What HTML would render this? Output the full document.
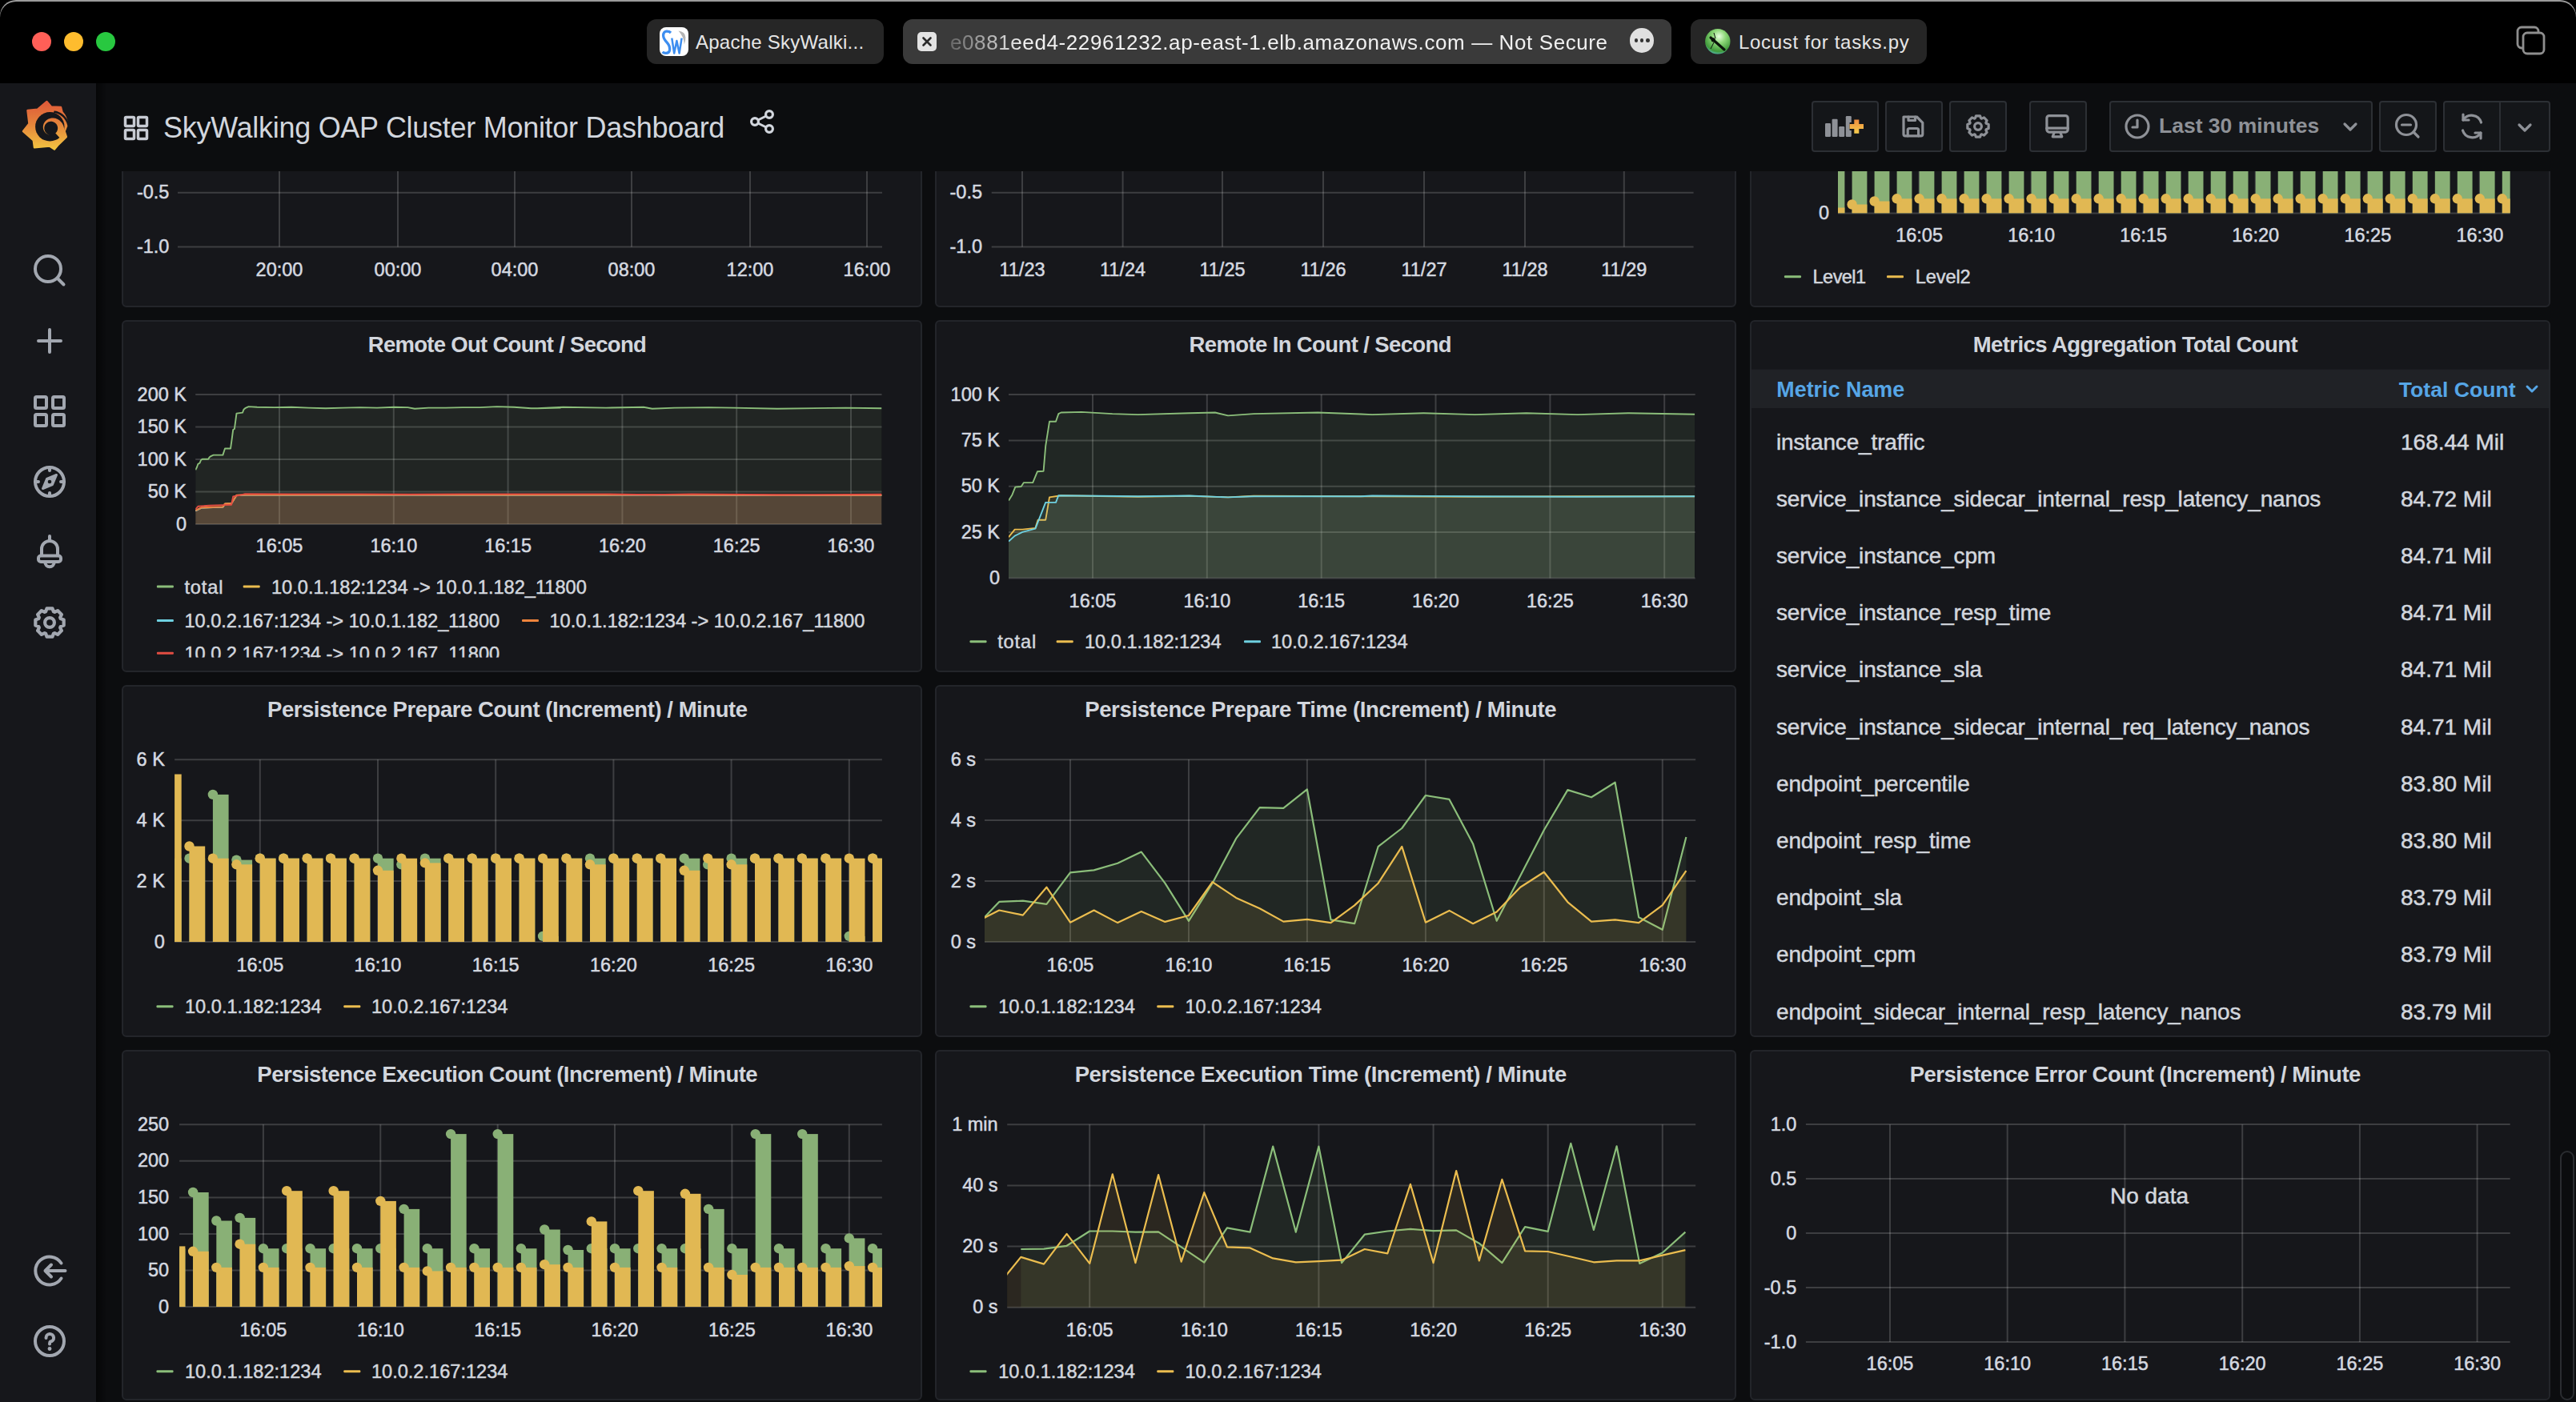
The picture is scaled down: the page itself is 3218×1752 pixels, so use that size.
<!DOCTYPE html><html><head><meta charset="utf-8"><style>html,body{margin:0;padding:0;background:#000;}body{width:3218px;height:1752px;overflow:hidden;position:relative;}</style></head><body>
<div style="position:absolute;left:120px;top:104px;width:3098px;height:1648px;background:#0c0d0f"></div>
<div style="position:absolute;left:0;top:214px;width:3218px;height:1538px;overflow:hidden">
<div style="position:absolute;left:152px;top:-270px;width:1000px;height:440px;box-sizing:border-box;background:#16171b;border:2px solid #23252a;border-radius:6px;overflow:hidden">
<svg style="position:absolute;left:-2px;top:-2px" width="1000" height="440" viewBox="152 -56 1000 440" font-family="Liberation Sans">
<line x1="222" x2="1102" y1="37" y2="37" stroke="rgba(255,255,255,0.17)" stroke-width="2"/>
<line x1="222" x2="1102" y1="104.9" y2="104.9" stroke="rgba(255,255,255,0.17)" stroke-width="2"/>
<line x1="222" x2="1102" y1="172.8" y2="172.8" stroke="rgba(255,255,255,0.17)" stroke-width="2"/>
<line x1="222" x2="1102" y1="240.7" y2="240.7" stroke="rgba(255,255,255,0.17)" stroke-width="2"/>
<line x1="222" x2="1102" y1="308.6" y2="308.6" stroke="rgba(255,255,255,0.17)" stroke-width="2"/>
<line x1="349" x2="349" y1="37" y2="308.6" stroke="rgba(255,255,255,0.17)" stroke-width="2"/>
<line x1="497" x2="497" y1="37" y2="308.6" stroke="rgba(255,255,255,0.17)" stroke-width="2"/>
<line x1="643" x2="643" y1="37" y2="308.6" stroke="rgba(255,255,255,0.17)" stroke-width="2"/>
<line x1="789" x2="789" y1="37" y2="308.6" stroke="rgba(255,255,255,0.17)" stroke-width="2"/>
<line x1="937" x2="937" y1="37" y2="308.6" stroke="rgba(255,255,255,0.17)" stroke-width="2"/>
<line x1="1083" x2="1083" y1="37" y2="308.6" stroke="rgba(255,255,255,0.17)" stroke-width="2"/>
<text x="211.4" y="44.6" text-anchor="end" font-size="23.5" fill="#d5d9e0" stroke="#d5d9e0" stroke-width="0.5">1.0</text>
<text x="211.4" y="112.5" text-anchor="end" font-size="23.5" fill="#d5d9e0" stroke="#d5d9e0" stroke-width="0.5">0.5</text>
<text x="211.4" y="180.4" text-anchor="end" font-size="23.5" fill="#d5d9e0" stroke="#d5d9e0" stroke-width="0.5">0</text>
<text x="211.4" y="248.3" text-anchor="end" font-size="23.5" fill="#d5d9e0" stroke="#d5d9e0" stroke-width="0.5">-0.5</text>
<text x="211.4" y="316.2" text-anchor="end" font-size="23.5" fill="#d5d9e0" stroke="#d5d9e0" stroke-width="0.5">-1.0</text>
<text x="349" y="344.7" text-anchor="middle" font-size="23.5" fill="#d5d9e0" stroke="#d5d9e0" stroke-width="0.5">20:00</text>
<text x="497" y="344.7" text-anchor="middle" font-size="23.5" fill="#d5d9e0" stroke="#d5d9e0" stroke-width="0.5">00:00</text>
<text x="643" y="344.7" text-anchor="middle" font-size="23.5" fill="#d5d9e0" stroke="#d5d9e0" stroke-width="0.5">04:00</text>
<text x="789" y="344.7" text-anchor="middle" font-size="23.5" fill="#d5d9e0" stroke="#d5d9e0" stroke-width="0.5">08:00</text>
<text x="937" y="344.7" text-anchor="middle" font-size="23.5" fill="#d5d9e0" stroke="#d5d9e0" stroke-width="0.5">12:00</text>
<text x="1083" y="344.7" text-anchor="middle" font-size="23.5" fill="#d5d9e0" stroke="#d5d9e0" stroke-width="0.5">16:00</text>
</svg>
</div>
<div style="position:absolute;left:1168px;top:-270px;width:1001px;height:440px;box-sizing:border-box;background:#16171b;border:2px solid #23252a;border-radius:6px;overflow:hidden">
<svg style="position:absolute;left:-2px;top:-2px" width="1001" height="440" viewBox="1168 -56 1001 440" font-family="Liberation Sans">
<line x1="1238.7" x2="2115.6" y1="37" y2="37" stroke="rgba(255,255,255,0.17)" stroke-width="2"/>
<line x1="1238.7" x2="2115.6" y1="104.9" y2="104.9" stroke="rgba(255,255,255,0.17)" stroke-width="2"/>
<line x1="1238.7" x2="2115.6" y1="172.8" y2="172.8" stroke="rgba(255,255,255,0.17)" stroke-width="2"/>
<line x1="1238.7" x2="2115.6" y1="240.7" y2="240.7" stroke="rgba(255,255,255,0.17)" stroke-width="2"/>
<line x1="1238.7" x2="2115.6" y1="308.6" y2="308.6" stroke="rgba(255,255,255,0.17)" stroke-width="2"/>
<line x1="1277" x2="1277" y1="37" y2="308.6" stroke="rgba(255,255,255,0.17)" stroke-width="2"/>
<line x1="1402.6" x2="1402.6" y1="37" y2="308.6" stroke="rgba(255,255,255,0.17)" stroke-width="2"/>
<line x1="1527" x2="1527" y1="37" y2="308.6" stroke="rgba(255,255,255,0.17)" stroke-width="2"/>
<line x1="1653" x2="1653" y1="37" y2="308.6" stroke="rgba(255,255,255,0.17)" stroke-width="2"/>
<line x1="1779" x2="1779" y1="37" y2="308.6" stroke="rgba(255,255,255,0.17)" stroke-width="2"/>
<line x1="1905" x2="1905" y1="37" y2="308.6" stroke="rgba(255,255,255,0.17)" stroke-width="2"/>
<line x1="2028.8" x2="2028.8" y1="37" y2="308.6" stroke="rgba(255,255,255,0.17)" stroke-width="2"/>
<text x="1227" y="44.6" text-anchor="end" font-size="23.5" fill="#d5d9e0" stroke="#d5d9e0" stroke-width="0.5">1.0</text>
<text x="1227" y="112.5" text-anchor="end" font-size="23.5" fill="#d5d9e0" stroke="#d5d9e0" stroke-width="0.5">0.5</text>
<text x="1227" y="180.4" text-anchor="end" font-size="23.5" fill="#d5d9e0" stroke="#d5d9e0" stroke-width="0.5">0</text>
<text x="1227" y="248.3" text-anchor="end" font-size="23.5" fill="#d5d9e0" stroke="#d5d9e0" stroke-width="0.5">-0.5</text>
<text x="1227" y="316.2" text-anchor="end" font-size="23.5" fill="#d5d9e0" stroke="#d5d9e0" stroke-width="0.5">-1.0</text>
<text x="1277" y="344.7" text-anchor="middle" font-size="23.5" fill="#d5d9e0" stroke="#d5d9e0" stroke-width="0.5">11/23</text>
<text x="1402.6" y="344.7" text-anchor="middle" font-size="23.5" fill="#d5d9e0" stroke="#d5d9e0" stroke-width="0.5">11/24</text>
<text x="1527" y="344.7" text-anchor="middle" font-size="23.5" fill="#d5d9e0" stroke="#d5d9e0" stroke-width="0.5">11/25</text>
<text x="1653" y="344.7" text-anchor="middle" font-size="23.5" fill="#d5d9e0" stroke="#d5d9e0" stroke-width="0.5">11/26</text>
<text x="1779" y="344.7" text-anchor="middle" font-size="23.5" fill="#d5d9e0" stroke="#d5d9e0" stroke-width="0.5">11/27</text>
<text x="1905" y="344.7" text-anchor="middle" font-size="23.5" fill="#d5d9e0" stroke="#d5d9e0" stroke-width="0.5">11/28</text>
<text x="2028.8" y="344.7" text-anchor="middle" font-size="23.5" fill="#d5d9e0" stroke="#d5d9e0" stroke-width="0.5">11/29</text>
</svg>
</div>
<div style="position:absolute;left:2186px;top:-270px;width:1000px;height:440px;box-sizing:border-box;background:#16171b;border:2px solid #23252a;border-radius:6px;overflow:hidden">
<svg style="position:absolute;left:-2px;top:-2px" width="1000" height="440" viewBox="2186 -56 1000 440" font-family="Liberation Sans">
<line x1="2296" x2="3135.7" y1="266.5" y2="266.5" stroke="rgba(255,255,255,0.17)" stroke-width="2"/>
<line x1="2397.6" x2="2397.6" y1="0" y2="266.5" stroke="rgba(255,255,255,0.17)" stroke-width="2"/>
<line x1="2537.6" x2="2537.6" y1="0" y2="266.5" stroke="rgba(255,255,255,0.17)" stroke-width="2"/>
<line x1="2677.7" x2="2677.7" y1="0" y2="266.5" stroke="rgba(255,255,255,0.17)" stroke-width="2"/>
<line x1="2817.7" x2="2817.7" y1="0" y2="266.5" stroke="rgba(255,255,255,0.17)" stroke-width="2"/>
<line x1="2957.8" x2="2957.8" y1="0" y2="266.5" stroke="rgba(255,255,255,0.17)" stroke-width="2"/>
<line x1="3097.8" x2="3097.8" y1="0" y2="266.5" stroke="rgba(255,255,255,0.17)" stroke-width="2"/>
<clipPath id="c2296_0"><rect x="2296" y="-40" width="839.7" height="306.5"/></clipPath><g clip-path="url(#c2296_0)">
<rect x="2285.6" y="-133.5" width="18.8" height="400" fill="#89b076" fill-opacity="1"/>
<rect x="2313.6" y="-133.5" width="18.8" height="400" fill="#89b076" fill-opacity="1"/>
<rect x="2341.6" y="-133.5" width="18.8" height="400" fill="#89b076" fill-opacity="1"/>
<rect x="2369.6" y="-133.5" width="18.8" height="400" fill="#89b076" fill-opacity="1"/>
<rect x="2397.6" y="-133.5" width="18.8" height="400" fill="#89b076" fill-opacity="1"/>
<rect x="2425.6" y="-133.5" width="18.8" height="400" fill="#89b076" fill-opacity="1"/>
<rect x="2453.6" y="-133.5" width="18.8" height="400" fill="#89b076" fill-opacity="1"/>
<rect x="2481.6" y="-133.5" width="18.8" height="400" fill="#89b076" fill-opacity="1"/>
<rect x="2509.6" y="-133.5" width="18.8" height="400" fill="#89b076" fill-opacity="1"/>
<rect x="2537.6" y="-133.5" width="18.8" height="400" fill="#89b076" fill-opacity="1"/>
<rect x="2565.6" y="-133.5" width="18.8" height="400" fill="#89b076" fill-opacity="1"/>
<rect x="2593.7" y="-133.5" width="18.8" height="400" fill="#89b076" fill-opacity="1"/>
<rect x="2621.7" y="-133.5" width="18.8" height="400" fill="#89b076" fill-opacity="1"/>
<rect x="2649.7" y="-133.5" width="18.8" height="400" fill="#89b076" fill-opacity="1"/>
<rect x="2677.7" y="-133.5" width="18.8" height="400" fill="#89b076" fill-opacity="1"/>
<rect x="2705.7" y="-133.5" width="18.8" height="400" fill="#89b076" fill-opacity="1"/>
<rect x="2733.7" y="-133.5" width="18.8" height="400" fill="#89b076" fill-opacity="1"/>
<rect x="2761.7" y="-133.5" width="18.8" height="400" fill="#89b076" fill-opacity="1"/>
<rect x="2789.7" y="-133.5" width="18.8" height="400" fill="#89b076" fill-opacity="1"/>
<rect x="2817.7" y="-133.5" width="18.8" height="400" fill="#89b076" fill-opacity="1"/>
<rect x="2845.7" y="-133.5" width="18.8" height="400" fill="#89b076" fill-opacity="1"/>
<rect x="2873.7" y="-133.5" width="18.8" height="400" fill="#89b076" fill-opacity="1"/>
<rect x="2901.7" y="-133.5" width="18.8" height="400" fill="#89b076" fill-opacity="1"/>
<rect x="2929.8" y="-133.5" width="18.8" height="400" fill="#89b076" fill-opacity="1"/>
<rect x="2957.8" y="-133.5" width="18.8" height="400" fill="#89b076" fill-opacity="1"/>
<rect x="2985.8" y="-133.5" width="18.8" height="400" fill="#89b076" fill-opacity="1"/>
<rect x="3013.8" y="-133.5" width="18.8" height="400" fill="#89b076" fill-opacity="1"/>
<rect x="3041.8" y="-133.5" width="18.8" height="400" fill="#89b076" fill-opacity="1"/>
<rect x="3069.8" y="-133.5" width="18.8" height="400" fill="#89b076" fill-opacity="1"/>
<rect x="3097.8" y="-133.5" width="18.8" height="400" fill="#89b076" fill-opacity="1"/>
<rect x="3125.8" y="-133.5" width="18.8" height="400" fill="#89b076" fill-opacity="1"/>
<circle cx="2285.6" cy="-133.5" r="6.2" fill="#89b076"/>
<circle cx="2313.6" cy="-133.5" r="6.2" fill="#89b076"/>
<circle cx="2341.6" cy="-133.5" r="6.2" fill="#89b076"/>
<circle cx="2369.6" cy="-133.5" r="6.2" fill="#89b076"/>
<circle cx="2397.6" cy="-133.5" r="6.2" fill="#89b076"/>
<circle cx="2425.6" cy="-133.5" r="6.2" fill="#89b076"/>
<circle cx="2453.6" cy="-133.5" r="6.2" fill="#89b076"/>
<circle cx="2481.6" cy="-133.5" r="6.2" fill="#89b076"/>
<circle cx="2509.6" cy="-133.5" r="6.2" fill="#89b076"/>
<circle cx="2537.6" cy="-133.5" r="6.2" fill="#89b076"/>
<circle cx="2565.6" cy="-133.5" r="6.2" fill="#89b076"/>
<circle cx="2593.7" cy="-133.5" r="6.2" fill="#89b076"/>
<circle cx="2621.7" cy="-133.5" r="6.2" fill="#89b076"/>
<circle cx="2649.7" cy="-133.5" r="6.2" fill="#89b076"/>
<circle cx="2677.7" cy="-133.5" r="6.2" fill="#89b076"/>
<circle cx="2705.7" cy="-133.5" r="6.2" fill="#89b076"/>
<circle cx="2733.7" cy="-133.5" r="6.2" fill="#89b076"/>
<circle cx="2761.7" cy="-133.5" r="6.2" fill="#89b076"/>
<circle cx="2789.7" cy="-133.5" r="6.2" fill="#89b076"/>
<circle cx="2817.7" cy="-133.5" r="6.2" fill="#89b076"/>
<circle cx="2845.7" cy="-133.5" r="6.2" fill="#89b076"/>
<circle cx="2873.7" cy="-133.5" r="6.2" fill="#89b076"/>
<circle cx="2901.7" cy="-133.5" r="6.2" fill="#89b076"/>
<circle cx="2929.8" cy="-133.5" r="6.2" fill="#89b076"/>
<circle cx="2957.8" cy="-133.5" r="6.2" fill="#89b076"/>
<circle cx="2985.8" cy="-133.5" r="6.2" fill="#89b076"/>
<circle cx="3013.8" cy="-133.5" r="6.2" fill="#89b076"/>
<circle cx="3041.8" cy="-133.5" r="6.2" fill="#89b076"/>
<circle cx="3069.8" cy="-133.5" r="6.2" fill="#89b076"/>
<circle cx="3097.8" cy="-133.5" r="6.2" fill="#89b076"/>
<circle cx="3125.8" cy="-133.5" r="6.2" fill="#89b076"/>
<rect x="2285.6" y="259.5" width="18.8" height="7" fill="#e1b853" fill-opacity="1"/>
<rect x="2313.6" y="255.5" width="18.8" height="11" fill="#e1b853" fill-opacity="1"/>
<rect x="2341.6" y="251.5" width="18.8" height="15" fill="#e1b853" fill-opacity="1"/>
<rect x="2369.6" y="248.3" width="18.8" height="18.2" fill="#e1b853" fill-opacity="1"/>
<rect x="2397.6" y="248.3" width="18.8" height="18.2" fill="#e1b853" fill-opacity="1"/>
<rect x="2425.6" y="248.3" width="18.8" height="18.2" fill="#e1b853" fill-opacity="1"/>
<rect x="2453.6" y="248.3" width="18.8" height="18.2" fill="#e1b853" fill-opacity="1"/>
<rect x="2481.6" y="248.3" width="18.8" height="18.2" fill="#e1b853" fill-opacity="1"/>
<rect x="2509.6" y="248.3" width="18.8" height="18.2" fill="#e1b853" fill-opacity="1"/>
<rect x="2537.6" y="248.3" width="18.8" height="18.2" fill="#e1b853" fill-opacity="1"/>
<rect x="2565.6" y="248.3" width="18.8" height="18.2" fill="#e1b853" fill-opacity="1"/>
<rect x="2593.7" y="248.3" width="18.8" height="18.2" fill="#e1b853" fill-opacity="1"/>
<rect x="2621.7" y="248.3" width="18.8" height="18.2" fill="#e1b853" fill-opacity="1"/>
<rect x="2649.7" y="248.3" width="18.8" height="18.2" fill="#e1b853" fill-opacity="1"/>
<rect x="2677.7" y="248.3" width="18.8" height="18.2" fill="#e1b853" fill-opacity="1"/>
<rect x="2705.7" y="248.3" width="18.8" height="18.2" fill="#e1b853" fill-opacity="1"/>
<rect x="2733.7" y="248.3" width="18.8" height="18.2" fill="#e1b853" fill-opacity="1"/>
<rect x="2761.7" y="248.3" width="18.8" height="18.2" fill="#e1b853" fill-opacity="1"/>
<rect x="2789.7" y="248.3" width="18.8" height="18.2" fill="#e1b853" fill-opacity="1"/>
<rect x="2817.7" y="248.3" width="18.8" height="18.2" fill="#e1b853" fill-opacity="1"/>
<rect x="2845.7" y="248.3" width="18.8" height="18.2" fill="#e1b853" fill-opacity="1"/>
<rect x="2873.7" y="248.3" width="18.8" height="18.2" fill="#e1b853" fill-opacity="1"/>
<rect x="2901.7" y="248.3" width="18.8" height="18.2" fill="#e1b853" fill-opacity="1"/>
<rect x="2929.8" y="248.3" width="18.8" height="18.2" fill="#e1b853" fill-opacity="1"/>
<rect x="2957.8" y="248.3" width="18.8" height="18.2" fill="#e1b853" fill-opacity="1"/>
<rect x="2985.8" y="248.3" width="18.8" height="18.2" fill="#e1b853" fill-opacity="1"/>
<rect x="3013.8" y="248.3" width="18.8" height="18.2" fill="#e1b853" fill-opacity="1"/>
<rect x="3041.8" y="248.3" width="18.8" height="18.2" fill="#e1b853" fill-opacity="1"/>
<rect x="3069.8" y="248.3" width="18.8" height="18.2" fill="#e1b853" fill-opacity="1"/>
<rect x="3097.8" y="248.3" width="18.8" height="18.2" fill="#e1b853" fill-opacity="1"/>
<rect x="3125.8" y="248.3" width="18.8" height="18.2" fill="#e1b853" fill-opacity="1"/>
<circle cx="2285.6" cy="259.5" r="6.2" fill="#e1b853"/>
<circle cx="2313.6" cy="255.5" r="6.2" fill="#e1b853"/>
<circle cx="2341.6" cy="251.5" r="6.2" fill="#e1b853"/>
<circle cx="2369.6" cy="248.3" r="6.2" fill="#e1b853"/>
<circle cx="2397.6" cy="248.3" r="6.2" fill="#e1b853"/>
<circle cx="2425.6" cy="248.3" r="6.2" fill="#e1b853"/>
<circle cx="2453.6" cy="248.3" r="6.2" fill="#e1b853"/>
<circle cx="2481.6" cy="248.3" r="6.2" fill="#e1b853"/>
<circle cx="2509.6" cy="248.3" r="6.2" fill="#e1b853"/>
<circle cx="2537.6" cy="248.3" r="6.2" fill="#e1b853"/>
<circle cx="2565.6" cy="248.3" r="6.2" fill="#e1b853"/>
<circle cx="2593.7" cy="248.3" r="6.2" fill="#e1b853"/>
<circle cx="2621.7" cy="248.3" r="6.2" fill="#e1b853"/>
<circle cx="2649.7" cy="248.3" r="6.2" fill="#e1b853"/>
<circle cx="2677.7" cy="248.3" r="6.2" fill="#e1b853"/>
<circle cx="2705.7" cy="248.3" r="6.2" fill="#e1b853"/>
<circle cx="2733.7" cy="248.3" r="6.2" fill="#e1b853"/>
<circle cx="2761.7" cy="248.3" r="6.2" fill="#e1b853"/>
<circle cx="2789.7" cy="248.3" r="6.2" fill="#e1b853"/>
<circle cx="2817.7" cy="248.3" r="6.2" fill="#e1b853"/>
<circle cx="2845.7" cy="248.3" r="6.2" fill="#e1b853"/>
<circle cx="2873.7" cy="248.3" r="6.2" fill="#e1b853"/>
<circle cx="2901.7" cy="248.3" r="6.2" fill="#e1b853"/>
<circle cx="2929.8" cy="248.3" r="6.2" fill="#e1b853"/>
<circle cx="2957.8" cy="248.3" r="6.2" fill="#e1b853"/>
<circle cx="2985.8" cy="248.3" r="6.2" fill="#e1b853"/>
<circle cx="3013.8" cy="248.3" r="6.2" fill="#e1b853"/>
<circle cx="3041.8" cy="248.3" r="6.2" fill="#e1b853"/>
<circle cx="3069.8" cy="248.3" r="6.2" fill="#e1b853"/>
<circle cx="3097.8" cy="248.3" r="6.2" fill="#e1b853"/>
<circle cx="3125.8" cy="248.3" r="6.2" fill="#e1b853"/>
</g>
<text x="2285" y="274.1" text-anchor="end" font-size="23.5" fill="#d5d9e0" stroke="#d5d9e0" stroke-width="0.5">0</text>
<text x="2397.6" y="302.2" text-anchor="middle" font-size="23.5" fill="#d5d9e0" stroke="#d5d9e0" stroke-width="0.5">16:05</text>
<text x="2537.6" y="302.2" text-anchor="middle" font-size="23.5" fill="#d5d9e0" stroke="#d5d9e0" stroke-width="0.5">16:10</text>
<text x="2677.7" y="302.2" text-anchor="middle" font-size="23.5" fill="#d5d9e0" stroke="#d5d9e0" stroke-width="0.5">16:15</text>
<text x="2817.7" y="302.2" text-anchor="middle" font-size="23.5" fill="#d5d9e0" stroke="#d5d9e0" stroke-width="0.5">16:20</text>
<text x="2957.8" y="302.2" text-anchor="middle" font-size="23.5" fill="#d5d9e0" stroke="#d5d9e0" stroke-width="0.5">16:25</text>
<text x="3097.8" y="302.2" text-anchor="middle" font-size="23.5" fill="#d5d9e0" stroke="#d5d9e0" stroke-width="0.5">16:30</text>
<rect x="2229" y="344.3" width="21" height="3" rx="1" fill="#8bbe7a"/>
<text x="2264.6" y="354.3" font-size="23.6" textLength="66.5" lengthAdjust="spacing" fill="#d2d6dd" stroke="#d2d6dd" stroke-width="0.5">Level1</text>
<rect x="2357" y="344.3" width="21" height="3" rx="1" fill="#ebbd4f"/>
<text x="2392.7" y="354.3" font-size="23.6" textLength="69" lengthAdjust="spacing" fill="#d2d6dd" stroke="#d2d6dd" stroke-width="0.5">Level2</text>
</svg>
</div>
<div style="position:absolute;left:152px;top:186px;width:1000px;height:440px;box-sizing:border-box;background:#16171b;border:2px solid #23252a;border-radius:6px;overflow:hidden">
<svg style="position:absolute;left:-2px;top:-2px" width="1000" height="440" viewBox="152 400 1000 440" font-family="Liberation Sans">
<text x="633.8" y="439.8" text-anchor="middle" font-size="27.5" font-weight="bold" textLength="348" lengthAdjust="spacing" fill="#d2d6dd">Remote Out Count / Second</text>
<line x1="244.2" x2="1101.5" y1="493" y2="493" stroke="rgba(255,255,255,0.17)" stroke-width="2"/>
<line x1="244.2" x2="1101.5" y1="533.5" y2="533.5" stroke="rgba(255,255,255,0.17)" stroke-width="2"/>
<line x1="244.2" x2="1101.5" y1="574" y2="574" stroke="rgba(255,255,255,0.17)" stroke-width="2"/>
<line x1="244.2" x2="1101.5" y1="614.5" y2="614.5" stroke="rgba(255,255,255,0.17)" stroke-width="2"/>
<line x1="244.2" x2="1101.5" y1="655" y2="655" stroke="rgba(255,255,255,0.17)" stroke-width="2"/>
<line x1="349" x2="349" y1="493" y2="655" stroke="rgba(255,255,255,0.17)" stroke-width="2"/>
<line x1="491.8" x2="491.8" y1="493" y2="655" stroke="rgba(255,255,255,0.17)" stroke-width="2"/>
<line x1="634.6" x2="634.6" y1="493" y2="655" stroke="rgba(255,255,255,0.17)" stroke-width="2"/>
<line x1="777.4" x2="777.4" y1="493" y2="655" stroke="rgba(255,255,255,0.17)" stroke-width="2"/>
<line x1="920.2" x2="920.2" y1="493" y2="655" stroke="rgba(255,255,255,0.17)" stroke-width="2"/>
<line x1="1063" x2="1063" y1="493" y2="655" stroke="rgba(255,255,255,0.17)" stroke-width="2"/>
<clipPath id="c244_493"><rect x="244.2" y="453" width="857.3" height="202"/></clipPath><g clip-path="url(#c244_493)">
<path d="M244.2 587.2 L245.9 584 L247.4 579.8 L249.5 578.7 L251 575 L252.7 573.8 L260.2 573.8 L261.7 571.2 L263.4 570.1 L266.6 568.6 L278.4 568.6 L281 560.5 L288 560.5 L289.5 549.8 L291.2 537 L292.9 535.9 L295.5 516.6 L303 515.6 L304.5 511.7 L306.2 510.2 L310.5 508.1 L321.2 508.7 L342.6 509.1 L364 508.7 L385.4 509.6 L406.8 510.2 L428.2 509.6 L449.6 509.1 L471 509.6 L492.4 508.7 L509.5 509.1 L518.1 510.8 L535.2 509.6 L556.6 509.6 L578 509.1 L599.4 509.1 L620.8 508.1 L642.2 508.7 L663.6 510.2 L700 509.6 L671.4 510.2 L703.5 508.7 L757 509.6 L804.1 508.7 L814.8 510.8 L842.6 509.6 L885.4 509.1 L917.5 509.6 L971 510.8 L1056.6 509.6 L1101.5 510.2 L1101.5 655 L244.2 655 Z" fill="#8bbe7a" fill-opacity="0.09"/>
<path d="M244.2 587.2 L245.9 584 L247.4 579.8 L249.5 578.7 L251 575 L252.7 573.8 L260.2 573.8 L261.7 571.2 L263.4 570.1 L266.6 568.6 L278.4 568.6 L281 560.5 L288 560.5 L289.5 549.8 L291.2 537 L292.9 535.9 L295.5 516.6 L303 515.6 L304.5 511.7 L306.2 510.2 L310.5 508.1 L321.2 508.7 L342.6 509.1 L364 508.7 L385.4 509.6 L406.8 510.2 L428.2 509.6 L449.6 509.1 L471 509.6 L492.4 508.7 L509.5 509.1 L518.1 510.8 L535.2 509.6 L556.6 509.6 L578 509.1 L599.4 509.1 L620.8 508.1 L642.2 508.7 L663.6 510.2 L700 509.6 L671.4 510.2 L703.5 508.7 L757 509.6 L804.1 508.7 L814.8 510.8 L842.6 509.6 L885.4 509.1 L917.5 509.6 L971 510.8 L1056.6 509.6 L1101.5 510.2" fill="none" stroke="#8bbe7a" stroke-width="1.9" stroke-linejoin="round"/>
<path d="M244.2 638.3 L251.6 634.6 L278.4 633.6 L281 629.7 L289.1 629.3 L295.5 619 L306.2 618.6 L364 618.6 L449.6 618.6 L578 618.6 L700 618.6 L757 618.6 L864 618.6 L971 619 L1101.5 619 L1101.5 655 L244.2 655 Z" fill="#ebbd4f" fill-opacity="0.09"/>
<path d="M244.2 638.3 L251.6 634.6 L278.4 633.6 L281 629.7 L289.1 629.3 L295.5 619 L306.2 618.6 L364 618.6 L449.6 618.6 L578 618.6 L700 618.6 L757 618.6 L864 618.6 L971 619 L1101.5 619" fill="none" stroke="#ebbd4f" stroke-width="1.9" stroke-linejoin="round"/>
<path d="M244.2 638.3 L251.6 634.6 L278.4 633.6 L281 629.7 L289.1 629.3 L295.5 619 L306.2 618.6 L364 618.6 L449.6 618.6 L578 618.6 L700 618.6 L757 618.6 L864 618.6 L971 619 L1101.5 619 L1101.5 655 L244.2 655 Z" fill="#6ed0e0" fill-opacity="0.09"/>
<path d="M244.2 638.3 L251.6 634.6 L278.4 633.6 L281 629.7 L289.1 629.3 L295.5 619 L306.2 618.6 L364 618.6 L449.6 618.6 L578 618.6 L700 618.6 L757 618.6 L864 618.6 L971 619 L1101.5 619" fill="none" stroke="#6ed0e0" stroke-width="1.9" stroke-linejoin="round"/>
<path d="M244.2 638 L251.6 634.3 L278.4 633.3 L281 629.4 L289.1 629 L295.5 618.7 L306.2 618.3 L364 618.3 L449.6 618.3 L578 618.3 L700 618.3 L757 618.3 L864 618.3 L971 618.7 L1101.5 618.7 L1101.5 655 L244.2 655 Z" fill="#ef843c" fill-opacity="0.09"/>
<path d="M244.2 638 L251.6 634.3 L278.4 633.3 L281 629.4 L289.1 629 L295.5 618.7 L306.2 618.3 L364 618.3 L449.6 618.3 L578 618.3 L700 618.3 L757 618.3 L864 618.3 L971 618.7 L1101.5 618.7" fill="none" stroke="#ef843c" stroke-width="1.9" stroke-linejoin="round"/>
<path d="M244.2 636.5 L247.4 632.8 L261.3 631.8 L278.4 631.1 L289.1 630.7 L291.2 620.4 L299.8 618.7 L306.2 617.2 L364 617.4 L449.6 617.4 L513.8 617.8 L578 617.4 L700 617.4 L757 617.4 L812.6 618.3 L864 617.4 L971 618.3 L1101.5 617.8 L1101.5 655 L244.2 655 Z" fill="#e24d42" fill-opacity="0.09"/>
<path d="M244.2 636.5 L247.4 632.8 L261.3 631.8 L278.4 631.1 L289.1 630.7 L291.2 620.4 L299.8 618.7 L306.2 617.2 L364 617.4 L449.6 617.4 L513.8 617.8 L578 617.4 L700 617.4 L757 617.4 L812.6 618.3 L864 617.4 L971 618.3 L1101.5 617.8" fill="none" stroke="#e24d42" stroke-width="1.9" stroke-linejoin="round"/>
</g>
<text x="233" y="500.6" text-anchor="end" font-size="23.5" fill="#d5d9e0" stroke="#d5d9e0" stroke-width="0.5">200 K</text>
<text x="233" y="541.1" text-anchor="end" font-size="23.5" fill="#d5d9e0" stroke="#d5d9e0" stroke-width="0.5">150 K</text>
<text x="233" y="581.6" text-anchor="end" font-size="23.5" fill="#d5d9e0" stroke="#d5d9e0" stroke-width="0.5">100 K</text>
<text x="233" y="622.1" text-anchor="end" font-size="23.5" fill="#d5d9e0" stroke="#d5d9e0" stroke-width="0.5">50 K</text>
<text x="233" y="662.6" text-anchor="end" font-size="23.5" fill="#d5d9e0" stroke="#d5d9e0" stroke-width="0.5">0</text>
<text x="349" y="690.1" text-anchor="middle" font-size="23.5" fill="#d5d9e0" stroke="#d5d9e0" stroke-width="0.5">16:05</text>
<text x="491.8" y="690.1" text-anchor="middle" font-size="23.5" fill="#d5d9e0" stroke="#d5d9e0" stroke-width="0.5">16:10</text>
<text x="634.6" y="690.1" text-anchor="middle" font-size="23.5" fill="#d5d9e0" stroke="#d5d9e0" stroke-width="0.5">16:15</text>
<text x="777.4" y="690.1" text-anchor="middle" font-size="23.5" fill="#d5d9e0" stroke="#d5d9e0" stroke-width="0.5">16:20</text>
<text x="920.2" y="690.1" text-anchor="middle" font-size="23.5" fill="#d5d9e0" stroke="#d5d9e0" stroke-width="0.5">16:25</text>
<text x="1063" y="690.1" text-anchor="middle" font-size="23.5" fill="#d5d9e0" stroke="#d5d9e0" stroke-width="0.5">16:30</text>
<rect x="195.9" y="731.5" width="21" height="3" rx="1" fill="#8bbe7a"/>
<text x="230.4" y="741.5" font-size="23.6" textLength="48" lengthAdjust="spacing" fill="#d2d6dd" stroke="#d2d6dd" stroke-width="0.5">total</text>
<rect x="303.7" y="731.5" width="21" height="3" rx="1" fill="#ebbd4f"/>
<text x="339" y="741.5" font-size="23.6" fill="#d2d6dd" stroke="#d2d6dd" stroke-width="0.5">10.0.1.182:1234 -&gt; 10.0.1.182_11800</text>
<rect x="195.9" y="774" width="21" height="3" rx="1" fill="#6ed0e0"/>
<text x="230.4" y="784" font-size="23.6" fill="#d2d6dd" stroke="#d2d6dd" stroke-width="0.5">10.0.2.167:1234 -&gt; 10.0.1.182_11800</text>
<rect x="652" y="774" width="21" height="3" rx="1" fill="#ef843c"/>
<text x="686.5" y="784" font-size="23.6" fill="#d2d6dd" stroke="#d2d6dd" stroke-width="0.5">10.0.1.182:1234 -&gt; 10.0.2.167_11800</text>
<clipPath id="lgclip1"><rect x="150" y="790" width="1000" height="31.5"/></clipPath><g clip-path="url(#lgclip1)">
<rect x="195.9" y="814.8" width="21" height="3" rx="1" fill="#e24d42"/>
<text x="230.4" y="824.8" font-size="23.6" fill="#d2d6dd" stroke="#d2d6dd" stroke-width="0.5">10.0.2.167:1234 -&gt; 10.0.2.167_11800</text>
</g>
</svg>
</div>
<div style="position:absolute;left:1168px;top:186px;width:1001px;height:440px;box-sizing:border-box;background:#16171b;border:2px solid #23252a;border-radius:6px;overflow:hidden">
<svg style="position:absolute;left:-2px;top:-2px" width="1001" height="440" viewBox="1168 400 1001 440" font-family="Liberation Sans">
<text x="1649.5" y="439.8" text-anchor="middle" font-size="27.5" font-weight="bold" textLength="328" lengthAdjust="spacing" fill="#d2d6dd">Remote In Count / Second</text>
<line x1="1260" x2="2117.7" y1="493" y2="493" stroke="rgba(255,255,255,0.17)" stroke-width="2"/>
<line x1="1260" x2="2117.7" y1="550.4" y2="550.4" stroke="rgba(255,255,255,0.17)" stroke-width="2"/>
<line x1="1260" x2="2117.7" y1="607.8" y2="607.8" stroke="rgba(255,255,255,0.17)" stroke-width="2"/>
<line x1="1260" x2="2117.7" y1="665.1" y2="665.1" stroke="rgba(255,255,255,0.17)" stroke-width="2"/>
<line x1="1260" x2="2117.7" y1="722.5" y2="722.5" stroke="rgba(255,255,255,0.17)" stroke-width="2"/>
<line x1="1365" x2="1365" y1="493" y2="722.5" stroke="rgba(255,255,255,0.17)" stroke-width="2"/>
<line x1="1507.8" x2="1507.8" y1="493" y2="722.5" stroke="rgba(255,255,255,0.17)" stroke-width="2"/>
<line x1="1650.7" x2="1650.7" y1="493" y2="722.5" stroke="rgba(255,255,255,0.17)" stroke-width="2"/>
<line x1="1793.5" x2="1793.5" y1="493" y2="722.5" stroke="rgba(255,255,255,0.17)" stroke-width="2"/>
<line x1="1936.4" x2="1936.4" y1="493" y2="722.5" stroke="rgba(255,255,255,0.17)" stroke-width="2"/>
<line x1="2079.2" x2="2079.2" y1="493" y2="722.5" stroke="rgba(255,255,255,0.17)" stroke-width="2"/>
<clipPath id="c1260_493"><rect x="1260" y="453" width="857.7" height="269.5"/></clipPath><g clip-path="url(#c1260_493)">
<path d="M1260 625.6 L1264.5 618.2 L1268.3 608.6 L1275.7 608 L1278.9 603.1 L1290.2 603.1 L1295.9 589.3 L1303.6 588.7 L1306.2 557.3 L1311 526.8 L1319 526.8 L1322.3 517.1 L1325.5 515.5 L1351.1 514.9 L1389.6 517.1 L1421.7 518.1 L1485.9 516.2 L1518 515.5 L1534.1 519.4 L1566.2 517.1 L1646.4 515.5 L1700 517.5 L1714.2 518.1 L1778.4 516.2 L1842.6 518.1 L1906.8 516.2 L1971 518.1 L2035.2 516.2 L2117.1 517.8 L2117.1 722.5 L1260 722.5 Z" fill="#8bbe7a" fill-opacity="0.1"/>
<path d="M1260 625.6 L1264.5 618.2 L1268.3 608.6 L1275.7 608 L1278.9 603.1 L1290.2 603.1 L1295.9 589.3 L1303.6 588.7 L1306.2 557.3 L1311 526.8 L1319 526.8 L1322.3 517.1 L1325.5 515.5 L1351.1 514.9 L1389.6 517.1 L1421.7 518.1 L1485.9 516.2 L1518 515.5 L1534.1 519.4 L1566.2 517.1 L1646.4 515.5 L1700 517.5 L1714.2 518.1 L1778.4 516.2 L1842.6 518.1 L1906.8 516.2 L1971 518.1 L2035.2 516.2 L2117.1 517.8" fill="none" stroke="#8bbe7a" stroke-width="1.9" stroke-linejoin="round"/>
<path d="M1260 671.2 L1267.7 661.6 L1277.3 661.6 L1293.4 659.9 L1296.6 649.7 L1306.2 649.7 L1311 621.4 L1325.5 619.2 L1421.7 620.8 L1485.9 619.8 L1534.1 621.4 L1566.2 619.8 L1700 620.2 L1714.2 620.2 L1842.6 620.8 L1971 620.2 L2117.1 620.2 L2117.1 722.5 L1260 722.5 Z" fill="#ebbd4f" fill-opacity="0.1"/>
<path d="M1260 671.2 L1267.7 661.6 L1277.3 661.6 L1293.4 659.9 L1296.6 649.7 L1306.2 649.7 L1311 621.4 L1325.5 619.2 L1421.7 620.8 L1485.9 619.8 L1534.1 621.4 L1566.2 619.8 L1700 620.2 L1714.2 620.2 L1842.6 620.8 L1971 620.2 L2117.1 620.2" fill="none" stroke="#ebbd4f" stroke-width="1.9" stroke-linejoin="round"/>
<path d="M1260 676.6 L1267.7 669.6 L1277.3 664.8 L1293.4 660.6 L1306.2 627.9 L1319 627.9 L1322.3 619.2 L1421.7 620.2 L1485.9 619.5 L1534.1 621.4 L1566.2 620.2 L1700 620.2 L1714.2 619.5 L1842.6 620.2 L1971 620.8 L2117.1 620.2 L2117.1 722.5 L1260 722.5 Z" fill="#6ed0e0" fill-opacity="0.1"/>
<path d="M1260 676.6 L1267.7 669.6 L1277.3 664.8 L1293.4 660.6 L1306.2 627.9 L1319 627.9 L1322.3 619.2 L1421.7 620.2 L1485.9 619.5 L1534.1 621.4 L1566.2 620.2 L1700 620.2 L1714.2 619.5 L1842.6 620.2 L1971 620.8 L2117.1 620.2" fill="none" stroke="#6ed0e0" stroke-width="1.9" stroke-linejoin="round"/>
</g>
<text x="1249" y="500.6" text-anchor="end" font-size="23.5" fill="#d5d9e0" stroke="#d5d9e0" stroke-width="0.5">100 K</text>
<text x="1249" y="558" text-anchor="end" font-size="23.5" fill="#d5d9e0" stroke="#d5d9e0" stroke-width="0.5">75 K</text>
<text x="1249" y="615.4" text-anchor="end" font-size="23.5" fill="#d5d9e0" stroke="#d5d9e0" stroke-width="0.5">50 K</text>
<text x="1249" y="672.7" text-anchor="end" font-size="23.5" fill="#d5d9e0" stroke="#d5d9e0" stroke-width="0.5">25 K</text>
<text x="1249" y="730.1" text-anchor="end" font-size="23.5" fill="#d5d9e0" stroke="#d5d9e0" stroke-width="0.5">0</text>
<text x="1365" y="758.5" text-anchor="middle" font-size="23.5" fill="#d5d9e0" stroke="#d5d9e0" stroke-width="0.5">16:05</text>
<text x="1507.8" y="758.5" text-anchor="middle" font-size="23.5" fill="#d5d9e0" stroke="#d5d9e0" stroke-width="0.5">16:10</text>
<text x="1650.7" y="758.5" text-anchor="middle" font-size="23.5" fill="#d5d9e0" stroke="#d5d9e0" stroke-width="0.5">16:15</text>
<text x="1793.5" y="758.5" text-anchor="middle" font-size="23.5" fill="#d5d9e0" stroke="#d5d9e0" stroke-width="0.5">16:20</text>
<text x="1936.4" y="758.5" text-anchor="middle" font-size="23.5" fill="#d5d9e0" stroke="#d5d9e0" stroke-width="0.5">16:25</text>
<text x="2079.2" y="758.5" text-anchor="middle" font-size="23.5" fill="#d5d9e0" stroke="#d5d9e0" stroke-width="0.5">16:30</text>
<rect x="1211.5" y="800.3" width="21" height="3" rx="1" fill="#8bbe7a"/>
<text x="1246.2" y="810.3" font-size="23.6" textLength="48" lengthAdjust="spacing" fill="#d2d6dd" stroke="#d2d6dd" stroke-width="0.5">total</text>
<rect x="1319.7" y="800.3" width="21" height="3" rx="1" fill="#ebbd4f"/>
<text x="1355" y="810.3" font-size="23.6" fill="#d2d6dd" stroke="#d2d6dd" stroke-width="0.5">10.0.1.182:1234</text>
<rect x="1554" y="800.3" width="21" height="3" rx="1" fill="#6ed0e0"/>
<text x="1588" y="810.3" font-size="23.6" fill="#d2d6dd" stroke="#d2d6dd" stroke-width="0.5">10.0.2.167:1234</text>
</svg>
</div>
<div style="position:absolute;left:2186px;top:186px;width:1000px;height:896px;box-sizing:border-box;background:#16171b;border:2px solid #23252a;border-radius:6px;overflow:hidden">
<svg style="position:absolute;left:-2px;top:-2px" width="1000" height="896" viewBox="2186 400 1000 896" font-family="Liberation Sans">
<text x="2667.7" y="439.8" text-anchor="middle" font-size="27.5" font-weight="bold" textLength="406" lengthAdjust="spacing" fill="#d2d6dd">Metrics Aggregation Total Count</text>
<rect x="2186" y="461.6" width="1000" height="48.4" fill="#202226"/>
<text x="2219.3" y="495.9" font-size="26.9" font-weight="bold" fill="#56a6e6">Metric Name</text>
<text x="2996.8" y="495.9" font-size="26.6" font-weight="bold" fill="#56a6e6">Total Count</text>
<path d="M3157 483 L3163 489 L3169 483" stroke="#56a6e6" stroke-width="3" fill="none" stroke-linecap="round" stroke-linejoin="round"/>
<text x="2219" y="561.6" font-size="28" letter-spacing="-0.15" fill="#d2d6dd" stroke="#d2d6dd" stroke-width="0.5">instance_traffic</text>
<text x="2999" y="561.6" font-size="28" fill="#d2d6dd" stroke="#d2d6dd" stroke-width="0.5">168.44 Mil</text>
<text x="2219" y="632.8" font-size="28" letter-spacing="-0.15" fill="#d2d6dd" stroke="#d2d6dd" stroke-width="0.5">service_instance_sidecar_internal_resp_latency_nanos</text>
<text x="2999" y="632.8" font-size="28" fill="#d2d6dd" stroke="#d2d6dd" stroke-width="0.5">84.72 Mil</text>
<text x="2219" y="704" font-size="28" letter-spacing="-0.15" fill="#d2d6dd" stroke="#d2d6dd" stroke-width="0.5">service_instance_cpm</text>
<text x="2999" y="704" font-size="28" fill="#d2d6dd" stroke="#d2d6dd" stroke-width="0.5">84.71 Mil</text>
<text x="2219" y="775.2" font-size="28" letter-spacing="-0.15" fill="#d2d6dd" stroke="#d2d6dd" stroke-width="0.5">service_instance_resp_time</text>
<text x="2999" y="775.2" font-size="28" fill="#d2d6dd" stroke="#d2d6dd" stroke-width="0.5">84.71 Mil</text>
<text x="2219" y="846.4" font-size="28" letter-spacing="-0.15" fill="#d2d6dd" stroke="#d2d6dd" stroke-width="0.5">service_instance_sla</text>
<text x="2999" y="846.4" font-size="28" fill="#d2d6dd" stroke="#d2d6dd" stroke-width="0.5">84.71 Mil</text>
<text x="2219" y="917.6" font-size="28" letter-spacing="-0.15" fill="#d2d6dd" stroke="#d2d6dd" stroke-width="0.5">service_instance_sidecar_internal_req_latency_nanos</text>
<text x="2999" y="917.6" font-size="28" fill="#d2d6dd" stroke="#d2d6dd" stroke-width="0.5">84.71 Mil</text>
<text x="2219" y="988.8" font-size="28" letter-spacing="-0.15" fill="#d2d6dd" stroke="#d2d6dd" stroke-width="0.5">endpoint_percentile</text>
<text x="2999" y="988.8" font-size="28" fill="#d2d6dd" stroke="#d2d6dd" stroke-width="0.5">83.80 Mil</text>
<text x="2219" y="1060" font-size="28" letter-spacing="-0.15" fill="#d2d6dd" stroke="#d2d6dd" stroke-width="0.5">endpoint_resp_time</text>
<text x="2999" y="1060" font-size="28" fill="#d2d6dd" stroke="#d2d6dd" stroke-width="0.5">83.80 Mil</text>
<text x="2219" y="1131.2" font-size="28" letter-spacing="-0.15" fill="#d2d6dd" stroke="#d2d6dd" stroke-width="0.5">endpoint_sla</text>
<text x="2999" y="1131.2" font-size="28" fill="#d2d6dd" stroke="#d2d6dd" stroke-width="0.5">83.79 Mil</text>
<text x="2219" y="1202.4" font-size="28" letter-spacing="-0.15" fill="#d2d6dd" stroke="#d2d6dd" stroke-width="0.5">endpoint_cpm</text>
<text x="2999" y="1202.4" font-size="28" fill="#d2d6dd" stroke="#d2d6dd" stroke-width="0.5">83.79 Mil</text>
<text x="2219" y="1273.6" font-size="28" letter-spacing="-0.15" fill="#d2d6dd" stroke="#d2d6dd" stroke-width="0.5">endpoint_sidecar_internal_resp_latency_nanos</text>
<text x="2999" y="1273.6" font-size="28" fill="#d2d6dd" stroke="#d2d6dd" stroke-width="0.5">83.79 Mil</text>
</svg>
</div>
<div style="position:absolute;left:152px;top:642px;width:1000px;height:440px;box-sizing:border-box;background:#16171b;border:2px solid #23252a;border-radius:6px;overflow:hidden">
<svg style="position:absolute;left:-2px;top:-2px" width="1000" height="440" viewBox="152 856 1000 440" font-family="Liberation Sans">
<text x="634" y="896.2" text-anchor="middle" font-size="27.5" font-weight="bold" textLength="600" lengthAdjust="spacing" fill="#d2d6dd">Persistence Prepare Count (Increment) / Minute</text>
<line x1="218.1" x2="1101.9" y1="949.2" y2="949.2" stroke="rgba(255,255,255,0.17)" stroke-width="2"/>
<line x1="218.1" x2="1101.9" y1="1025.2" y2="1025.2" stroke="rgba(255,255,255,0.17)" stroke-width="2"/>
<line x1="218.1" x2="1101.9" y1="1101.1" y2="1101.1" stroke="rgba(255,255,255,0.17)" stroke-width="2"/>
<line x1="218.1" x2="1101.9" y1="1177.1" y2="1177.1" stroke="rgba(255,255,255,0.17)" stroke-width="2"/>
<line x1="324.8" x2="324.8" y1="949.2" y2="1177.1" stroke="rgba(255,255,255,0.17)" stroke-width="2"/>
<line x1="472" x2="472" y1="949.2" y2="1177.1" stroke="rgba(255,255,255,0.17)" stroke-width="2"/>
<line x1="619.2" x2="619.2" y1="949.2" y2="1177.1" stroke="rgba(255,255,255,0.17)" stroke-width="2"/>
<line x1="766.4" x2="766.4" y1="949.2" y2="1177.1" stroke="rgba(255,255,255,0.17)" stroke-width="2"/>
<line x1="913.6" x2="913.6" y1="949.2" y2="1177.1" stroke="rgba(255,255,255,0.17)" stroke-width="2"/>
<line x1="1060.8" x2="1060.8" y1="949.2" y2="1177.1" stroke="rgba(255,255,255,0.17)" stroke-width="2"/>
<clipPath id="c218_949"><rect x="218.1" y="909.2" width="883.8" height="267.9"/></clipPath><g clip-path="url(#c218_949)">
<rect x="207" y="1072.7" width="19.7" height="104.4" fill="#89b076" fill-opacity="1"/>
<rect x="236.5" y="1072.7" width="19.7" height="104.4" fill="#89b076" fill-opacity="1"/>
<rect x="265.9" y="992.9" width="19.7" height="184.2" fill="#89b076" fill-opacity="1"/>
<rect x="295.4" y="1074.6" width="19.7" height="102.5" fill="#89b076" fill-opacity="1"/>
<rect x="324.8" y="1072.7" width="19.7" height="104.4" fill="#89b076" fill-opacity="1"/>
<rect x="354.2" y="1072.7" width="19.7" height="104.4" fill="#89b076" fill-opacity="1"/>
<rect x="383.7" y="1072.7" width="19.7" height="104.4" fill="#89b076" fill-opacity="1"/>
<rect x="413.1" y="1072.7" width="19.7" height="104.4" fill="#89b076" fill-opacity="1"/>
<rect x="442.6" y="1072.7" width="19.7" height="104.4" fill="#89b076" fill-opacity="1"/>
<rect x="472" y="1072.7" width="19.7" height="104.4" fill="#89b076" fill-opacity="1"/>
<rect x="501.4" y="1080.3" width="19.7" height="96.8" fill="#89b076" fill-opacity="1"/>
<rect x="530.9" y="1072.7" width="19.7" height="104.4" fill="#89b076" fill-opacity="1"/>
<rect x="560.3" y="1072.7" width="19.7" height="104.4" fill="#89b076" fill-opacity="1"/>
<rect x="589.8" y="1072.7" width="19.7" height="104.4" fill="#89b076" fill-opacity="1"/>
<rect x="619.2" y="1072.7" width="19.7" height="104.4" fill="#89b076" fill-opacity="1"/>
<rect x="648.6" y="1072.7" width="19.7" height="104.4" fill="#89b076" fill-opacity="1"/>
<rect x="678.1" y="1169.9" width="19.7" height="7.2" fill="#89b076" fill-opacity="1"/>
<rect x="707.5" y="1072.7" width="19.7" height="104.4" fill="#89b076" fill-opacity="1"/>
<rect x="737" y="1072.7" width="19.7" height="104.4" fill="#89b076" fill-opacity="1"/>
<rect x="766.4" y="1072.7" width="19.7" height="104.4" fill="#89b076" fill-opacity="1"/>
<rect x="795.8" y="1072.7" width="19.7" height="104.4" fill="#89b076" fill-opacity="1"/>
<rect x="825.3" y="1072.7" width="19.7" height="104.4" fill="#89b076" fill-opacity="1"/>
<rect x="854.7" y="1072.7" width="19.7" height="104.4" fill="#89b076" fill-opacity="1"/>
<rect x="884.2" y="1080.3" width="19.7" height="96.8" fill="#89b076" fill-opacity="1"/>
<rect x="913.6" y="1072.7" width="19.7" height="104.4" fill="#89b076" fill-opacity="1"/>
<rect x="943" y="1072.7" width="19.7" height="104.4" fill="#89b076" fill-opacity="1"/>
<rect x="972.5" y="1072.7" width="19.7" height="104.4" fill="#89b076" fill-opacity="1"/>
<rect x="1001.9" y="1072.7" width="19.7" height="104.4" fill="#89b076" fill-opacity="1"/>
<rect x="1031.4" y="1072.7" width="19.7" height="104.4" fill="#89b076" fill-opacity="1"/>
<rect x="1060.8" y="1169.9" width="19.7" height="7.2" fill="#89b076" fill-opacity="1"/>
<rect x="1090.2" y="1072.7" width="19.7" height="104.4" fill="#89b076" fill-opacity="1"/>
<circle cx="207" cy="1072.7" r="6.2" fill="#89b076"/>
<circle cx="236.5" cy="1072.7" r="6.2" fill="#89b076"/>
<circle cx="265.9" cy="992.9" r="6.2" fill="#89b076"/>
<circle cx="295.4" cy="1074.6" r="6.2" fill="#89b076"/>
<circle cx="324.8" cy="1072.7" r="6.2" fill="#89b076"/>
<circle cx="354.2" cy="1072.7" r="6.2" fill="#89b076"/>
<circle cx="383.7" cy="1072.7" r="6.2" fill="#89b076"/>
<circle cx="413.1" cy="1072.7" r="6.2" fill="#89b076"/>
<circle cx="442.6" cy="1072.7" r="6.2" fill="#89b076"/>
<circle cx="472" cy="1072.7" r="6.2" fill="#89b076"/>
<circle cx="501.4" cy="1080.3" r="6.2" fill="#89b076"/>
<circle cx="530.9" cy="1072.7" r="6.2" fill="#89b076"/>
<circle cx="560.3" cy="1072.7" r="6.2" fill="#89b076"/>
<circle cx="589.8" cy="1072.7" r="6.2" fill="#89b076"/>
<circle cx="619.2" cy="1072.7" r="6.2" fill="#89b076"/>
<circle cx="648.6" cy="1072.7" r="6.2" fill="#89b076"/>
<circle cx="678.1" cy="1169.9" r="6.2" fill="#89b076"/>
<circle cx="707.5" cy="1072.7" r="6.2" fill="#89b076"/>
<circle cx="737" cy="1072.7" r="6.2" fill="#89b076"/>
<circle cx="766.4" cy="1072.7" r="6.2" fill="#89b076"/>
<circle cx="795.8" cy="1072.7" r="6.2" fill="#89b076"/>
<circle cx="825.3" cy="1072.7" r="6.2" fill="#89b076"/>
<circle cx="854.7" cy="1072.7" r="6.2" fill="#89b076"/>
<circle cx="884.2" cy="1080.3" r="6.2" fill="#89b076"/>
<circle cx="913.6" cy="1072.7" r="6.2" fill="#89b076"/>
<circle cx="943" cy="1072.7" r="6.2" fill="#89b076"/>
<circle cx="972.5" cy="1072.7" r="6.2" fill="#89b076"/>
<circle cx="1001.9" cy="1072.7" r="6.2" fill="#89b076"/>
<circle cx="1031.4" cy="1072.7" r="6.2" fill="#89b076"/>
<circle cx="1060.8" cy="1169.9" r="6.2" fill="#89b076"/>
<circle cx="1090.2" cy="1072.7" r="6.2" fill="#89b076"/>
<rect x="207" y="967.5" width="19.7" height="209.6" fill="#e1b853" fill-opacity="1"/>
<rect x="236.5" y="1057.5" width="19.7" height="119.6" fill="#e1b853" fill-opacity="1"/>
<rect x="265.9" y="1072.7" width="19.7" height="104.4" fill="#e1b853" fill-opacity="1"/>
<rect x="295.4" y="1080.3" width="19.7" height="96.8" fill="#e1b853" fill-opacity="1"/>
<rect x="324.8" y="1072.7" width="19.7" height="104.4" fill="#e1b853" fill-opacity="1"/>
<rect x="354.2" y="1072.7" width="19.7" height="104.4" fill="#e1b853" fill-opacity="1"/>
<rect x="383.7" y="1072.7" width="19.7" height="104.4" fill="#e1b853" fill-opacity="1"/>
<rect x="413.1" y="1072.7" width="19.7" height="104.4" fill="#e1b853" fill-opacity="1"/>
<rect x="442.6" y="1072.7" width="19.7" height="104.4" fill="#e1b853" fill-opacity="1"/>
<rect x="472" y="1087.8" width="19.7" height="89.3" fill="#e1b853" fill-opacity="1"/>
<rect x="501.4" y="1072.7" width="19.7" height="104.4" fill="#e1b853" fill-opacity="1"/>
<rect x="530.9" y="1078.4" width="19.7" height="98.7" fill="#e1b853" fill-opacity="1"/>
<rect x="560.3" y="1072.7" width="19.7" height="104.4" fill="#e1b853" fill-opacity="1"/>
<rect x="589.8" y="1072.7" width="19.7" height="104.4" fill="#e1b853" fill-opacity="1"/>
<rect x="619.2" y="1072.7" width="19.7" height="104.4" fill="#e1b853" fill-opacity="1"/>
<rect x="648.6" y="1072.7" width="19.7" height="104.4" fill="#e1b853" fill-opacity="1"/>
<rect x="678.1" y="1072.7" width="19.7" height="104.4" fill="#e1b853" fill-opacity="1"/>
<rect x="707.5" y="1072.7" width="19.7" height="104.4" fill="#e1b853" fill-opacity="1"/>
<rect x="737" y="1080.3" width="19.7" height="96.8" fill="#e1b853" fill-opacity="1"/>
<rect x="766.4" y="1072.7" width="19.7" height="104.4" fill="#e1b853" fill-opacity="1"/>
<rect x="795.8" y="1072.7" width="19.7" height="104.4" fill="#e1b853" fill-opacity="1"/>
<rect x="825.3" y="1072.7" width="19.7" height="104.4" fill="#e1b853" fill-opacity="1"/>
<rect x="854.7" y="1087.8" width="19.7" height="89.3" fill="#e1b853" fill-opacity="1"/>
<rect x="884.2" y="1072.7" width="19.7" height="104.4" fill="#e1b853" fill-opacity="1"/>
<rect x="913.6" y="1080.3" width="19.7" height="96.8" fill="#e1b853" fill-opacity="1"/>
<rect x="943" y="1072.7" width="19.7" height="104.4" fill="#e1b853" fill-opacity="1"/>
<rect x="972.5" y="1072.7" width="19.7" height="104.4" fill="#e1b853" fill-opacity="1"/>
<rect x="1001.9" y="1072.7" width="19.7" height="104.4" fill="#e1b853" fill-opacity="1"/>
<rect x="1031.4" y="1072.7" width="19.7" height="104.4" fill="#e1b853" fill-opacity="1"/>
<rect x="1060.8" y="1072.7" width="19.7" height="104.4" fill="#e1b853" fill-opacity="1"/>
<rect x="1090.2" y="1072.7" width="19.7" height="104.4" fill="#e1b853" fill-opacity="1"/>
<circle cx="207" cy="967.5" r="6.2" fill="#e1b853"/>
<circle cx="236.5" cy="1057.5" r="6.2" fill="#e1b853"/>
<circle cx="265.9" cy="1072.7" r="6.2" fill="#e1b853"/>
<circle cx="295.4" cy="1080.3" r="6.2" fill="#e1b853"/>
<circle cx="324.8" cy="1072.7" r="6.2" fill="#e1b853"/>
<circle cx="354.2" cy="1072.7" r="6.2" fill="#e1b853"/>
<circle cx="383.7" cy="1072.7" r="6.2" fill="#e1b853"/>
<circle cx="413.1" cy="1072.7" r="6.2" fill="#e1b853"/>
<circle cx="442.6" cy="1072.7" r="6.2" fill="#e1b853"/>
<circle cx="472" cy="1087.8" r="6.2" fill="#e1b853"/>
<circle cx="501.4" cy="1072.7" r="6.2" fill="#e1b853"/>
<circle cx="530.9" cy="1078.4" r="6.2" fill="#e1b853"/>
<circle cx="560.3" cy="1072.7" r="6.2" fill="#e1b853"/>
<circle cx="589.8" cy="1072.7" r="6.2" fill="#e1b853"/>
<circle cx="619.2" cy="1072.7" r="6.2" fill="#e1b853"/>
<circle cx="648.6" cy="1072.7" r="6.2" fill="#e1b853"/>
<circle cx="678.1" cy="1072.7" r="6.2" fill="#e1b853"/>
<circle cx="707.5" cy="1072.7" r="6.2" fill="#e1b853"/>
<circle cx="737" cy="1080.3" r="6.2" fill="#e1b853"/>
<circle cx="766.4" cy="1072.7" r="6.2" fill="#e1b853"/>
<circle cx="795.8" cy="1072.7" r="6.2" fill="#e1b853"/>
<circle cx="825.3" cy="1072.7" r="6.2" fill="#e1b853"/>
<circle cx="854.7" cy="1087.8" r="6.2" fill="#e1b853"/>
<circle cx="884.2" cy="1072.7" r="6.2" fill="#e1b853"/>
<circle cx="913.6" cy="1080.3" r="6.2" fill="#e1b853"/>
<circle cx="943" cy="1072.7" r="6.2" fill="#e1b853"/>
<circle cx="972.5" cy="1072.7" r="6.2" fill="#e1b853"/>
<circle cx="1001.9" cy="1072.7" r="6.2" fill="#e1b853"/>
<circle cx="1031.4" cy="1072.7" r="6.2" fill="#e1b853"/>
<circle cx="1060.8" cy="1072.7" r="6.2" fill="#e1b853"/>
<circle cx="1090.2" cy="1072.7" r="6.2" fill="#e1b853"/>
</g>
<text x="205.9" y="956.8" text-anchor="end" font-size="23.5" fill="#d5d9e0" stroke="#d5d9e0" stroke-width="0.5">6 K</text>
<text x="205.9" y="1032.8" text-anchor="end" font-size="23.5" fill="#d5d9e0" stroke="#d5d9e0" stroke-width="0.5">4 K</text>
<text x="205.9" y="1108.7" text-anchor="end" font-size="23.5" fill="#d5d9e0" stroke="#d5d9e0" stroke-width="0.5">2 K</text>
<text x="205.9" y="1184.7" text-anchor="end" font-size="23.5" fill="#d5d9e0" stroke="#d5d9e0" stroke-width="0.5">0</text>
<text x="324.8" y="1214" text-anchor="middle" font-size="23.5" fill="#d5d9e0" stroke="#d5d9e0" stroke-width="0.5">16:05</text>
<text x="472" y="1214" text-anchor="middle" font-size="23.5" fill="#d5d9e0" stroke="#d5d9e0" stroke-width="0.5">16:10</text>
<text x="619.2" y="1214" text-anchor="middle" font-size="23.5" fill="#d5d9e0" stroke="#d5d9e0" stroke-width="0.5">16:15</text>
<text x="766.4" y="1214" text-anchor="middle" font-size="23.5" fill="#d5d9e0" stroke="#d5d9e0" stroke-width="0.5">16:20</text>
<text x="913.6" y="1214" text-anchor="middle" font-size="23.5" fill="#d5d9e0" stroke="#d5d9e0" stroke-width="0.5">16:25</text>
<text x="1060.8" y="1214" text-anchor="middle" font-size="23.5" fill="#d5d9e0" stroke="#d5d9e0" stroke-width="0.5">16:30</text>
<rect x="195.5" y="1256.3" width="21" height="3" rx="1" fill="#8bbe7a"/>
<text x="231" y="1266.3" font-size="23.6" fill="#d2d6dd" stroke="#d2d6dd" stroke-width="0.5">10.0.1.182:1234</text>
<rect x="429.3" y="1256.3" width="21" height="3" rx="1" fill="#ebbd4f"/>
<text x="463.9" y="1266.3" font-size="23.6" fill="#d2d6dd" stroke="#d2d6dd" stroke-width="0.5">10.0.2.167:1234</text>
</svg>
</div>
<div style="position:absolute;left:1168px;top:642px;width:1001px;height:440px;box-sizing:border-box;background:#16171b;border:2px solid #23252a;border-radius:6px;overflow:hidden">
<svg style="position:absolute;left:-2px;top:-2px" width="1001" height="440" viewBox="1168 856 1001 440" font-family="Liberation Sans">
<text x="1649.9" y="896.2" text-anchor="middle" font-size="27.5" font-weight="bold" textLength="589.5" lengthAdjust="spacing" fill="#d2d6dd">Persistence Prepare Time (Increment) / Minute</text>
<line x1="1230" x2="2118.2" y1="949.2" y2="949.2" stroke="rgba(255,255,255,0.17)" stroke-width="2"/>
<line x1="1230" x2="2118.2" y1="1025.1" y2="1025.1" stroke="rgba(255,255,255,0.17)" stroke-width="2"/>
<line x1="1230" x2="2118.2" y1="1101.1" y2="1101.1" stroke="rgba(255,255,255,0.17)" stroke-width="2"/>
<line x1="1230" x2="2118.2" y1="1177" y2="1177" stroke="rgba(255,255,255,0.17)" stroke-width="2"/>
<line x1="1337" x2="1337" y1="949.2" y2="1177" stroke="rgba(255,255,255,0.17)" stroke-width="2"/>
<line x1="1485" x2="1485" y1="949.2" y2="1177" stroke="rgba(255,255,255,0.17)" stroke-width="2"/>
<line x1="1632.9" x2="1632.9" y1="949.2" y2="1177" stroke="rgba(255,255,255,0.17)" stroke-width="2"/>
<line x1="1780.9" x2="1780.9" y1="949.2" y2="1177" stroke="rgba(255,255,255,0.17)" stroke-width="2"/>
<line x1="1928.8" x2="1928.8" y1="949.2" y2="1177" stroke="rgba(255,255,255,0.17)" stroke-width="2"/>
<line x1="2076.8" x2="2076.8" y1="949.2" y2="1177" stroke="rgba(255,255,255,0.17)" stroke-width="2"/>
<clipPath id="c1230_949"><rect x="1230" y="909.2" width="888.2" height="267.8"/></clipPath><g clip-path="url(#c1230_949)">
<path d="M1218.6 1158 L1248.2 1126.9 L1277.8 1125.7 L1307.4 1129.9 L1337 1090.4 L1366.6 1087.4 L1396.2 1078.7 L1425.8 1064.6 L1455.4 1103.7 L1485 1150.8 L1514.6 1103.7 L1544.1 1047.9 L1573.7 1009.2 L1603.3 1009.9 L1632.9 986.4 L1662.5 1149.3 L1692.1 1154.2 L1721.7 1057.8 L1751.3 1035 L1780.9 994 L1810.5 998.9 L1840.1 1054.4 L1869.7 1150.8 L1899.2 1094.6 L1928.8 1037.3 L1958.4 987.1 L1988 996.3 L2017.6 977.7 L2047.2 1146.2 L2076.8 1161.8 L2106.4 1046 L2106.4 1177 L1218.6 1177 Z" fill="#8bbe7a" fill-opacity="0.1"/>
<path d="M1218.6 1158 L1248.2 1126.9 L1277.8 1125.7 L1307.4 1129.9 L1337 1090.4 L1366.6 1087.4 L1396.2 1078.7 L1425.8 1064.6 L1455.4 1103.7 L1485 1150.8 L1514.6 1103.7 L1544.1 1047.9 L1573.7 1009.2 L1603.3 1009.9 L1632.9 986.4 L1662.5 1149.3 L1692.1 1154.2 L1721.7 1057.8 L1751.3 1035 L1780.9 994 L1810.5 998.9 L1840.1 1054.4 L1869.7 1150.8 L1899.2 1094.6 L1928.8 1037.3 L1958.4 987.1 L1988 996.3 L2017.6 977.7 L2047.2 1146.2 L2076.8 1161.8 L2106.4 1046" fill="none" stroke="#8bbe7a" stroke-width="2.2" stroke-linejoin="round"/>
<path d="M1218.6 1152.7 L1248.2 1137.5 L1277.8 1143.6 L1307.4 1108.7 L1337 1152.7 L1366.6 1137.5 L1396.2 1153.1 L1425.8 1139 L1455.4 1151.9 L1485 1144 L1514.6 1102.2 L1544.1 1121.9 L1573.7 1135.2 L1603.3 1151.6 L1632.9 1148.9 L1662.5 1153.1 L1692.1 1131.4 L1721.7 1103.7 L1751.3 1057.8 L1780.9 1152.7 L1810.5 1137.9 L1840.1 1154.2 L1869.7 1139.4 L1899.2 1108.7 L1928.8 1089.7 L1958.4 1127.3 L1988 1151.6 L2017.6 1149.3 L2047.2 1153.1 L2076.8 1131.1 L2106.4 1088.2 L2106.4 1177 L1218.6 1177 Z" fill="#ebbd4f" fill-opacity="0.1"/>
<path d="M1218.6 1152.7 L1248.2 1137.5 L1277.8 1143.6 L1307.4 1108.7 L1337 1152.7 L1366.6 1137.5 L1396.2 1153.1 L1425.8 1139 L1455.4 1151.9 L1485 1144 L1514.6 1102.2 L1544.1 1121.9 L1573.7 1135.2 L1603.3 1151.6 L1632.9 1148.9 L1662.5 1153.1 L1692.1 1131.4 L1721.7 1103.7 L1751.3 1057.8 L1780.9 1152.7 L1810.5 1137.9 L1840.1 1154.2 L1869.7 1139.4 L1899.2 1108.7 L1928.8 1089.7 L1958.4 1127.3 L1988 1151.6 L2017.6 1149.3 L2047.2 1153.1 L2076.8 1131.1 L2106.4 1088.2" fill="none" stroke="#ebbd4f" stroke-width="2.2" stroke-linejoin="round"/>
</g>
<text x="1219" y="956.8" text-anchor="end" font-size="23.5" fill="#d5d9e0" stroke="#d5d9e0" stroke-width="0.5">6 s</text>
<text x="1219" y="1032.7" text-anchor="end" font-size="23.5" fill="#d5d9e0" stroke="#d5d9e0" stroke-width="0.5">4 s</text>
<text x="1219" y="1108.7" text-anchor="end" font-size="23.5" fill="#d5d9e0" stroke="#d5d9e0" stroke-width="0.5">2 s</text>
<text x="1219" y="1184.6" text-anchor="end" font-size="23.5" fill="#d5d9e0" stroke="#d5d9e0" stroke-width="0.5">0 s</text>
<text x="1337" y="1214" text-anchor="middle" font-size="23.5" fill="#d5d9e0" stroke="#d5d9e0" stroke-width="0.5">16:05</text>
<text x="1485" y="1214" text-anchor="middle" font-size="23.5" fill="#d5d9e0" stroke="#d5d9e0" stroke-width="0.5">16:10</text>
<text x="1632.9" y="1214" text-anchor="middle" font-size="23.5" fill="#d5d9e0" stroke="#d5d9e0" stroke-width="0.5">16:15</text>
<text x="1780.9" y="1214" text-anchor="middle" font-size="23.5" fill="#d5d9e0" stroke="#d5d9e0" stroke-width="0.5">16:20</text>
<text x="1928.8" y="1214" text-anchor="middle" font-size="23.5" fill="#d5d9e0" stroke="#d5d9e0" stroke-width="0.5">16:25</text>
<text x="2076.8" y="1214" text-anchor="middle" font-size="23.5" fill="#d5d9e0" stroke="#d5d9e0" stroke-width="0.5">16:30</text>
<rect x="1211.5" y="1256.3" width="21" height="3" rx="1" fill="#8bbe7a"/>
<text x="1247.2" y="1266.3" font-size="23.6" fill="#d2d6dd" stroke="#d2d6dd" stroke-width="0.5">10.0.1.182:1234</text>
<rect x="1445.3" y="1256.3" width="21" height="3" rx="1" fill="#ebbd4f"/>
<text x="1480.4" y="1266.3" font-size="23.6" fill="#d2d6dd" stroke="#d2d6dd" stroke-width="0.5">10.0.2.167:1234</text>
</svg>
</div>
<div style="position:absolute;left:152px;top:1098px;width:1000px;height:438px;box-sizing:border-box;background:#16171b;border:2px solid #23252a;border-radius:6px;overflow:hidden">
<svg style="position:absolute;left:-2px;top:-2px" width="1000" height="438" viewBox="152 1312 1000 438" font-family="Liberation Sans">
<text x="634" y="1352.2" text-anchor="middle" font-size="27.5" font-weight="bold" textLength="625.3" lengthAdjust="spacing" fill="#d2d6dd">Persistence Execution Count (Increment) / Minute</text>
<line x1="224.1" x2="1101.9" y1="1405.2" y2="1405.2" stroke="rgba(255,255,255,0.17)" stroke-width="2"/>
<line x1="224.1" x2="1101.9" y1="1450.8" y2="1450.8" stroke="rgba(255,255,255,0.17)" stroke-width="2"/>
<line x1="224.1" x2="1101.9" y1="1496.4" y2="1496.4" stroke="rgba(255,255,255,0.17)" stroke-width="2"/>
<line x1="224.1" x2="1101.9" y1="1541.9" y2="1541.9" stroke="rgba(255,255,255,0.17)" stroke-width="2"/>
<line x1="224.1" x2="1101.9" y1="1587.5" y2="1587.5" stroke="rgba(255,255,255,0.17)" stroke-width="2"/>
<line x1="224.1" x2="1101.9" y1="1633.1" y2="1633.1" stroke="rgba(255,255,255,0.17)" stroke-width="2"/>
<line x1="328.9" x2="328.9" y1="1405.2" y2="1633.1" stroke="rgba(255,255,255,0.17)" stroke-width="2"/>
<line x1="475.3" x2="475.3" y1="1405.2" y2="1633.1" stroke="rgba(255,255,255,0.17)" stroke-width="2"/>
<line x1="621.7" x2="621.7" y1="1405.2" y2="1633.1" stroke="rgba(255,255,255,0.17)" stroke-width="2"/>
<line x1="768" x2="768" y1="1405.2" y2="1633.1" stroke="rgba(255,255,255,0.17)" stroke-width="2"/>
<line x1="914.4" x2="914.4" y1="1405.2" y2="1633.1" stroke="rgba(255,255,255,0.17)" stroke-width="2"/>
<line x1="1060.8" x2="1060.8" y1="1405.2" y2="1633.1" stroke="rgba(255,255,255,0.17)" stroke-width="2"/>
<clipPath id="c224_1405"><rect x="224.1" y="1365.2" width="877.8" height="267.9"/></clipPath><g clip-path="url(#c224_1405)">
<rect x="211.8" y="1560.2" width="19.6" height="72.9" fill="#89b076" fill-opacity="1"/>
<rect x="241.1" y="1490" width="19.6" height="143.1" fill="#89b076" fill-opacity="1"/>
<rect x="270.3" y="1525.5" width="19.6" height="107.6" fill="#89b076" fill-opacity="1"/>
<rect x="299.6" y="1521.9" width="19.6" height="111.2" fill="#89b076" fill-opacity="1"/>
<rect x="328.9" y="1560.2" width="19.6" height="72.9" fill="#89b076" fill-opacity="1"/>
<rect x="358.2" y="1560.2" width="19.6" height="72.9" fill="#89b076" fill-opacity="1"/>
<rect x="387.5" y="1560.2" width="19.6" height="72.9" fill="#89b076" fill-opacity="1"/>
<rect x="416.7" y="1560.2" width="19.6" height="72.9" fill="#89b076" fill-opacity="1"/>
<rect x="446" y="1560.2" width="19.6" height="72.9" fill="#89b076" fill-opacity="1"/>
<rect x="475.3" y="1560.2" width="19.6" height="72.9" fill="#89b076" fill-opacity="1"/>
<rect x="504.6" y="1510.9" width="19.6" height="122.2" fill="#89b076" fill-opacity="1"/>
<rect x="533.8" y="1560.2" width="19.6" height="72.9" fill="#89b076" fill-opacity="1"/>
<rect x="563.1" y="1417.1" width="19.6" height="216" fill="#89b076" fill-opacity="1"/>
<rect x="592.4" y="1560.2" width="19.6" height="72.9" fill="#89b076" fill-opacity="1"/>
<rect x="621.7" y="1417.1" width="19.6" height="216" fill="#89b076" fill-opacity="1"/>
<rect x="650.9" y="1560.2" width="19.6" height="72.9" fill="#89b076" fill-opacity="1"/>
<rect x="680.2" y="1536.5" width="19.6" height="96.6" fill="#89b076" fill-opacity="1"/>
<rect x="709.5" y="1562" width="19.6" height="71.1" fill="#89b076" fill-opacity="1"/>
<rect x="738.8" y="1560.2" width="19.6" height="72.9" fill="#89b076" fill-opacity="1"/>
<rect x="768" y="1560.2" width="19.6" height="72.9" fill="#89b076" fill-opacity="1"/>
<rect x="797.3" y="1560.2" width="19.6" height="72.9" fill="#89b076" fill-opacity="1"/>
<rect x="826.6" y="1560.2" width="19.6" height="72.9" fill="#89b076" fill-opacity="1"/>
<rect x="855.9" y="1560.2" width="19.6" height="72.9" fill="#89b076" fill-opacity="1"/>
<rect x="885.1" y="1510.9" width="19.6" height="122.2" fill="#89b076" fill-opacity="1"/>
<rect x="914.4" y="1560.2" width="19.6" height="72.9" fill="#89b076" fill-opacity="1"/>
<rect x="943.7" y="1417.1" width="19.6" height="216" fill="#89b076" fill-opacity="1"/>
<rect x="973" y="1560.2" width="19.6" height="72.9" fill="#89b076" fill-opacity="1"/>
<rect x="1002.2" y="1417.1" width="19.6" height="216" fill="#89b076" fill-opacity="1"/>
<rect x="1031.5" y="1560.2" width="19.6" height="72.9" fill="#89b076" fill-opacity="1"/>
<rect x="1060.8" y="1547.4" width="19.6" height="85.7" fill="#89b076" fill-opacity="1"/>
<rect x="1090.1" y="1560.2" width="19.6" height="72.9" fill="#89b076" fill-opacity="1"/>
<circle cx="211.8" cy="1560.2" r="6.2" fill="#89b076"/>
<circle cx="241.1" cy="1490" r="6.2" fill="#89b076"/>
<circle cx="270.3" cy="1525.5" r="6.2" fill="#89b076"/>
<circle cx="299.6" cy="1521.9" r="6.2" fill="#89b076"/>
<circle cx="328.9" cy="1560.2" r="6.2" fill="#89b076"/>
<circle cx="358.2" cy="1560.2" r="6.2" fill="#89b076"/>
<circle cx="387.5" cy="1560.2" r="6.2" fill="#89b076"/>
<circle cx="416.7" cy="1560.2" r="6.2" fill="#89b076"/>
<circle cx="446" cy="1560.2" r="6.2" fill="#89b076"/>
<circle cx="475.3" cy="1560.2" r="6.2" fill="#89b076"/>
<circle cx="504.6" cy="1510.9" r="6.2" fill="#89b076"/>
<circle cx="533.8" cy="1560.2" r="6.2" fill="#89b076"/>
<circle cx="563.1" cy="1417.1" r="6.2" fill="#89b076"/>
<circle cx="592.4" cy="1560.2" r="6.2" fill="#89b076"/>
<circle cx="621.7" cy="1417.1" r="6.2" fill="#89b076"/>
<circle cx="650.9" cy="1560.2" r="6.2" fill="#89b076"/>
<circle cx="680.2" cy="1536.5" r="6.2" fill="#89b076"/>
<circle cx="709.5" cy="1562" r="6.2" fill="#89b076"/>
<circle cx="738.8" cy="1560.2" r="6.2" fill="#89b076"/>
<circle cx="768" cy="1560.2" r="6.2" fill="#89b076"/>
<circle cx="797.3" cy="1560.2" r="6.2" fill="#89b076"/>
<circle cx="826.6" cy="1560.2" r="6.2" fill="#89b076"/>
<circle cx="855.9" cy="1560.2" r="6.2" fill="#89b076"/>
<circle cx="885.1" cy="1510.9" r="6.2" fill="#89b076"/>
<circle cx="914.4" cy="1560.2" r="6.2" fill="#89b076"/>
<circle cx="943.7" cy="1417.1" r="6.2" fill="#89b076"/>
<circle cx="973" cy="1560.2" r="6.2" fill="#89b076"/>
<circle cx="1002.2" cy="1417.1" r="6.2" fill="#89b076"/>
<circle cx="1031.5" cy="1560.2" r="6.2" fill="#89b076"/>
<circle cx="1060.8" cy="1547.4" r="6.2" fill="#89b076"/>
<circle cx="1090.1" cy="1560.2" r="6.2" fill="#89b076"/>
<rect x="211.8" y="1557.4" width="19.6" height="75.7" fill="#e1b853" fill-opacity="1"/>
<rect x="241.1" y="1563.8" width="19.6" height="69.3" fill="#e1b853" fill-opacity="1"/>
<rect x="270.3" y="1583.9" width="19.6" height="49.2" fill="#e1b853" fill-opacity="1"/>
<rect x="299.6" y="1554.7" width="19.6" height="78.4" fill="#e1b853" fill-opacity="1"/>
<rect x="328.9" y="1583.9" width="19.6" height="49.2" fill="#e1b853" fill-opacity="1"/>
<rect x="358.2" y="1488.2" width="19.6" height="144.9" fill="#e1b853" fill-opacity="1"/>
<rect x="387.5" y="1583.9" width="19.6" height="49.2" fill="#e1b853" fill-opacity="1"/>
<rect x="416.7" y="1488.2" width="19.6" height="144.9" fill="#e1b853" fill-opacity="1"/>
<rect x="446" y="1583.9" width="19.6" height="49.2" fill="#e1b853" fill-opacity="1"/>
<rect x="475.3" y="1500.9" width="19.6" height="132.2" fill="#e1b853" fill-opacity="1"/>
<rect x="504.6" y="1583.9" width="19.6" height="49.2" fill="#e1b853" fill-opacity="1"/>
<rect x="533.8" y="1588.4" width="19.6" height="44.7" fill="#e1b853" fill-opacity="1"/>
<rect x="563.1" y="1583.9" width="19.6" height="49.2" fill="#e1b853" fill-opacity="1"/>
<rect x="592.4" y="1583.9" width="19.6" height="49.2" fill="#e1b853" fill-opacity="1"/>
<rect x="621.7" y="1583.9" width="19.6" height="49.2" fill="#e1b853" fill-opacity="1"/>
<rect x="650.9" y="1583.9" width="19.6" height="49.2" fill="#e1b853" fill-opacity="1"/>
<rect x="680.2" y="1580.2" width="19.6" height="52.9" fill="#e1b853" fill-opacity="1"/>
<rect x="709.5" y="1583.9" width="19.6" height="49.2" fill="#e1b853" fill-opacity="1"/>
<rect x="738.8" y="1526.4" width="19.6" height="106.7" fill="#e1b853" fill-opacity="1"/>
<rect x="768" y="1583.9" width="19.6" height="49.2" fill="#e1b853" fill-opacity="1"/>
<rect x="797.3" y="1488.2" width="19.6" height="144.9" fill="#e1b853" fill-opacity="1"/>
<rect x="826.6" y="1583.9" width="19.6" height="49.2" fill="#e1b853" fill-opacity="1"/>
<rect x="855.9" y="1491.8" width="19.6" height="141.3" fill="#e1b853" fill-opacity="1"/>
<rect x="885.1" y="1583.9" width="19.6" height="49.2" fill="#e1b853" fill-opacity="1"/>
<rect x="914.4" y="1593" width="19.6" height="40.1" fill="#e1b853" fill-opacity="1"/>
<rect x="943.7" y="1583.9" width="19.6" height="49.2" fill="#e1b853" fill-opacity="1"/>
<rect x="973" y="1583.9" width="19.6" height="49.2" fill="#e1b853" fill-opacity="1"/>
<rect x="1002.2" y="1583.9" width="19.6" height="49.2" fill="#e1b853" fill-opacity="1"/>
<rect x="1031.5" y="1583.9" width="19.6" height="49.2" fill="#e1b853" fill-opacity="1"/>
<rect x="1060.8" y="1582.1" width="19.6" height="51" fill="#e1b853" fill-opacity="1"/>
<rect x="1090.1" y="1583.9" width="19.6" height="49.2" fill="#e1b853" fill-opacity="1"/>
<circle cx="211.8" cy="1557.4" r="6.2" fill="#e1b853"/>
<circle cx="241.1" cy="1563.8" r="6.2" fill="#e1b853"/>
<circle cx="270.3" cy="1583.9" r="6.2" fill="#e1b853"/>
<circle cx="299.6" cy="1554.7" r="6.2" fill="#e1b853"/>
<circle cx="328.9" cy="1583.9" r="6.2" fill="#e1b853"/>
<circle cx="358.2" cy="1488.2" r="6.2" fill="#e1b853"/>
<circle cx="387.5" cy="1583.9" r="6.2" fill="#e1b853"/>
<circle cx="416.7" cy="1488.2" r="6.2" fill="#e1b853"/>
<circle cx="446" cy="1583.9" r="6.2" fill="#e1b853"/>
<circle cx="475.3" cy="1500.9" r="6.2" fill="#e1b853"/>
<circle cx="504.6" cy="1583.9" r="6.2" fill="#e1b853"/>
<circle cx="533.8" cy="1588.4" r="6.2" fill="#e1b853"/>
<circle cx="563.1" cy="1583.9" r="6.2" fill="#e1b853"/>
<circle cx="592.4" cy="1583.9" r="6.2" fill="#e1b853"/>
<circle cx="621.7" cy="1583.9" r="6.2" fill="#e1b853"/>
<circle cx="650.9" cy="1583.9" r="6.2" fill="#e1b853"/>
<circle cx="680.2" cy="1580.2" r="6.2" fill="#e1b853"/>
<circle cx="709.5" cy="1583.9" r="6.2" fill="#e1b853"/>
<circle cx="738.8" cy="1526.4" r="6.2" fill="#e1b853"/>
<circle cx="768" cy="1583.9" r="6.2" fill="#e1b853"/>
<circle cx="797.3" cy="1488.2" r="6.2" fill="#e1b853"/>
<circle cx="826.6" cy="1583.9" r="6.2" fill="#e1b853"/>
<circle cx="855.9" cy="1491.8" r="6.2" fill="#e1b853"/>
<circle cx="885.1" cy="1583.9" r="6.2" fill="#e1b853"/>
<circle cx="914.4" cy="1593" r="6.2" fill="#e1b853"/>
<circle cx="943.7" cy="1583.9" r="6.2" fill="#e1b853"/>
<circle cx="973" cy="1583.9" r="6.2" fill="#e1b853"/>
<circle cx="1002.2" cy="1583.9" r="6.2" fill="#e1b853"/>
<circle cx="1031.5" cy="1583.9" r="6.2" fill="#e1b853"/>
<circle cx="1060.8" cy="1582.1" r="6.2" fill="#e1b853"/>
<circle cx="1090.1" cy="1583.9" r="6.2" fill="#e1b853"/>
</g>
<text x="211.2" y="1412.8" text-anchor="end" font-size="23.5" fill="#d5d9e0" stroke="#d5d9e0" stroke-width="0.5">250</text>
<text x="211.2" y="1458.4" text-anchor="end" font-size="23.5" fill="#d5d9e0" stroke="#d5d9e0" stroke-width="0.5">200</text>
<text x="211.2" y="1504" text-anchor="end" font-size="23.5" fill="#d5d9e0" stroke="#d5d9e0" stroke-width="0.5">150</text>
<text x="211.2" y="1549.5" text-anchor="end" font-size="23.5" fill="#d5d9e0" stroke="#d5d9e0" stroke-width="0.5">100</text>
<text x="211.2" y="1595.1" text-anchor="end" font-size="23.5" fill="#d5d9e0" stroke="#d5d9e0" stroke-width="0.5">50</text>
<text x="211.2" y="1640.7" text-anchor="end" font-size="23.5" fill="#d5d9e0" stroke="#d5d9e0" stroke-width="0.5">0</text>
<text x="328.9" y="1670" text-anchor="middle" font-size="23.5" fill="#d5d9e0" stroke="#d5d9e0" stroke-width="0.5">16:05</text>
<text x="475.3" y="1670" text-anchor="middle" font-size="23.5" fill="#d5d9e0" stroke="#d5d9e0" stroke-width="0.5">16:10</text>
<text x="621.7" y="1670" text-anchor="middle" font-size="23.5" fill="#d5d9e0" stroke="#d5d9e0" stroke-width="0.5">16:15</text>
<text x="768" y="1670" text-anchor="middle" font-size="23.5" fill="#d5d9e0" stroke="#d5d9e0" stroke-width="0.5">16:20</text>
<text x="914.4" y="1670" text-anchor="middle" font-size="23.5" fill="#d5d9e0" stroke="#d5d9e0" stroke-width="0.5">16:25</text>
<text x="1060.8" y="1670" text-anchor="middle" font-size="23.5" fill="#d5d9e0" stroke="#d5d9e0" stroke-width="0.5">16:30</text>
<rect x="195.5" y="1712.3" width="21" height="3" rx="1" fill="#8bbe7a"/>
<text x="231" y="1722.3" font-size="23.6" fill="#d2d6dd" stroke="#d2d6dd" stroke-width="0.5">10.0.1.182:1234</text>
<rect x="429.3" y="1712.3" width="21" height="3" rx="1" fill="#ebbd4f"/>
<text x="463.9" y="1722.3" font-size="23.6" fill="#d2d6dd" stroke="#d2d6dd" stroke-width="0.5">10.0.2.167:1234</text>
</svg>
</div>
<div style="position:absolute;left:1168px;top:1098px;width:1001px;height:438px;box-sizing:border-box;background:#16171b;border:2px solid #23252a;border-radius:6px;overflow:hidden">
<svg style="position:absolute;left:-2px;top:-2px" width="1001" height="438" viewBox="1168 1312 1001 438" font-family="Liberation Sans">
<text x="1650" y="1352.2" text-anchor="middle" font-size="27.5" font-weight="bold" textLength="614.6" lengthAdjust="spacing" fill="#d2d6dd">Persistence Execution Time (Increment) / Minute</text>
<line x1="1258.2" x2="2118.2" y1="1405.2" y2="1405.2" stroke="rgba(255,255,255,0.17)" stroke-width="2"/>
<line x1="1258.2" x2="2118.2" y1="1481.4" y2="1481.4" stroke="rgba(255,255,255,0.17)" stroke-width="2"/>
<line x1="1258.2" x2="2118.2" y1="1557.5" y2="1557.5" stroke="rgba(255,255,255,0.17)" stroke-width="2"/>
<line x1="1258.2" x2="2118.2" y1="1633.7" y2="1633.7" stroke="rgba(255,255,255,0.17)" stroke-width="2"/>
<line x1="1361.2" x2="1361.2" y1="1405.2" y2="1633.7" stroke="rgba(255,255,255,0.17)" stroke-width="2"/>
<line x1="1504.3" x2="1504.3" y1="1405.2" y2="1633.7" stroke="rgba(255,255,255,0.17)" stroke-width="2"/>
<line x1="1647.4" x2="1647.4" y1="1405.2" y2="1633.7" stroke="rgba(255,255,255,0.17)" stroke-width="2"/>
<line x1="1790.6" x2="1790.6" y1="1405.2" y2="1633.7" stroke="rgba(255,255,255,0.17)" stroke-width="2"/>
<line x1="1933.7" x2="1933.7" y1="1405.2" y2="1633.7" stroke="rgba(255,255,255,0.17)" stroke-width="2"/>
<line x1="2076.8" x2="2076.8" y1="1405.2" y2="1633.7" stroke="rgba(255,255,255,0.17)" stroke-width="2"/>
<clipPath id="c1258_1405"><rect x="1258.2" y="1365.2" width="860" height="268.5"/></clipPath><g clip-path="url(#c1258_1405)">
<path d="M1275.3 1561 L1304 1560.6 L1332.6 1556.8 L1361.2 1538.5 L1389.8 1538.5 L1418.4 1539.6 L1447.1 1539.3 L1475.7 1558.3 L1504.3 1577.7 L1532.9 1534.3 L1561.6 1539.6 L1590.2 1432.6 L1618.8 1539.6 L1647.4 1432.6 L1676.1 1578.1 L1704.7 1542.7 L1733.3 1538.5 L1761.9 1535.8 L1790.6 1538.1 L1819.2 1537.4 L1847.8 1553.7 L1876.4 1578.1 L1905.1 1533.2 L1933.7 1538.9 L1962.3 1428.8 L1990.9 1537 L2019.6 1432.3 L2048.2 1578.9 L2076.8 1565.5 L2105.4 1539.6 L2105.4 1633.7 L1275.3 1633.7 Z" fill="#8bbe7a" fill-opacity="0.1"/>
<path d="M1275.3 1561 L1304 1560.6 L1332.6 1556.8 L1361.2 1538.5 L1389.8 1538.5 L1418.4 1539.6 L1447.1 1539.3 L1475.7 1558.3 L1504.3 1577.7 L1532.9 1534.3 L1561.6 1539.6 L1590.2 1432.6 L1618.8 1539.6 L1647.4 1432.6 L1676.1 1578.1 L1704.7 1542.7 L1733.3 1538.5 L1761.9 1535.8 L1790.6 1538.1 L1819.2 1537.4 L1847.8 1553.7 L1876.4 1578.1 L1905.1 1533.2 L1933.7 1538.9 L1962.3 1428.8 L1990.9 1537 L2019.6 1432.3 L2048.2 1578.9 L2076.8 1565.5 L2105.4 1539.6" fill="none" stroke="#8bbe7a" stroke-width="2.2" stroke-linejoin="round"/>
<path d="M1246.7 1606.3 L1275.3 1570.9 L1304 1579.6 L1332.6 1541.9 L1361.2 1578.9 L1389.8 1467.3 L1418.4 1578.1 L1447.1 1468.1 L1475.7 1576.6 L1504.3 1490.1 L1532.9 1558.3 L1561.6 1559.4 L1590.2 1572.4 L1618.8 1577.3 L1647.4 1576.2 L1676.1 1574.7 L1704.7 1561 L1733.3 1566.3 L1761.9 1479.9 L1790.6 1578.1 L1819.2 1463.1 L1847.8 1575.4 L1876.4 1473.8 L1905.1 1563.3 L1933.7 1564 L1962.3 1570.5 L1990.9 1577.3 L2019.6 1575.4 L2048.2 1575.4 L2076.8 1568.6 L2105.4 1562.1 L2105.4 1633.7 L1246.7 1633.7 Z" fill="#ebbd4f" fill-opacity="0.1"/>
<path d="M1246.7 1606.3 L1275.3 1570.9 L1304 1579.6 L1332.6 1541.9 L1361.2 1578.9 L1389.8 1467.3 L1418.4 1578.1 L1447.1 1468.1 L1475.7 1576.6 L1504.3 1490.1 L1532.9 1558.3 L1561.6 1559.4 L1590.2 1572.4 L1618.8 1577.3 L1647.4 1576.2 L1676.1 1574.7 L1704.7 1561 L1733.3 1566.3 L1761.9 1479.9 L1790.6 1578.1 L1819.2 1463.1 L1847.8 1575.4 L1876.4 1473.8 L1905.1 1563.3 L1933.7 1564 L1962.3 1570.5 L1990.9 1577.3 L2019.6 1575.4 L2048.2 1575.4 L2076.8 1568.6 L2105.4 1562.1" fill="none" stroke="#ebbd4f" stroke-width="2.2" stroke-linejoin="round"/>
</g>
<text x="1246.6" y="1412.8" text-anchor="end" font-size="23.5" fill="#d5d9e0" stroke="#d5d9e0" stroke-width="0.5">1 min</text>
<text x="1246.6" y="1489" text-anchor="end" font-size="23.5" fill="#d5d9e0" stroke="#d5d9e0" stroke-width="0.5">40 s</text>
<text x="1246.6" y="1565.1" text-anchor="end" font-size="23.5" fill="#d5d9e0" stroke="#d5d9e0" stroke-width="0.5">20 s</text>
<text x="1246.6" y="1641.3" text-anchor="end" font-size="23.5" fill="#d5d9e0" stroke="#d5d9e0" stroke-width="0.5">0 s</text>
<text x="1361.2" y="1670" text-anchor="middle" font-size="23.5" fill="#d5d9e0" stroke="#d5d9e0" stroke-width="0.5">16:05</text>
<text x="1504.3" y="1670" text-anchor="middle" font-size="23.5" fill="#d5d9e0" stroke="#d5d9e0" stroke-width="0.5">16:10</text>
<text x="1647.4" y="1670" text-anchor="middle" font-size="23.5" fill="#d5d9e0" stroke="#d5d9e0" stroke-width="0.5">16:15</text>
<text x="1790.6" y="1670" text-anchor="middle" font-size="23.5" fill="#d5d9e0" stroke="#d5d9e0" stroke-width="0.5">16:20</text>
<text x="1933.7" y="1670" text-anchor="middle" font-size="23.5" fill="#d5d9e0" stroke="#d5d9e0" stroke-width="0.5">16:25</text>
<text x="2076.8" y="1670" text-anchor="middle" font-size="23.5" fill="#d5d9e0" stroke="#d5d9e0" stroke-width="0.5">16:30</text>
<rect x="1211.5" y="1712.3" width="21" height="3" rx="1" fill="#8bbe7a"/>
<text x="1247.2" y="1722.3" font-size="23.6" fill="#d2d6dd" stroke="#d2d6dd" stroke-width="0.5">10.0.1.182:1234</text>
<rect x="1445.3" y="1712.3" width="21" height="3" rx="1" fill="#ebbd4f"/>
<text x="1480.4" y="1722.3" font-size="23.6" fill="#d2d6dd" stroke="#d2d6dd" stroke-width="0.5">10.0.2.167:1234</text>
</svg>
</div>
<div style="position:absolute;left:2186px;top:1098px;width:1000px;height:438px;box-sizing:border-box;background:#16171b;border:2px solid #23252a;border-radius:6px;overflow:hidden">
<svg style="position:absolute;left:-2px;top:-2px" width="1000" height="438" viewBox="2186 1312 1000 438" font-family="Liberation Sans">
<text x="2667.5" y="1352.2" text-anchor="middle" font-size="27.5" font-weight="bold" textLength="563.7" lengthAdjust="spacing" fill="#d2d6dd">Persistence Error Count (Increment) / Minute</text>
<line x1="2255.9" x2="3135.7" y1="1405.1" y2="1405.1" stroke="rgba(255,255,255,0.17)" stroke-width="2"/>
<line x1="2255.9" x2="3135.7" y1="1473" y2="1473" stroke="rgba(255,255,255,0.17)" stroke-width="2"/>
<line x1="2255.9" x2="3135.7" y1="1541" y2="1541" stroke="rgba(255,255,255,0.17)" stroke-width="2"/>
<line x1="2255.9" x2="3135.7" y1="1609" y2="1609" stroke="rgba(255,255,255,0.17)" stroke-width="2"/>
<line x1="2255.9" x2="3135.7" y1="1676.9" y2="1676.9" stroke="rgba(255,255,255,0.17)" stroke-width="2"/>
<line x1="2361" x2="2361" y1="1405.2" y2="1677" stroke="rgba(255,255,255,0.17)" stroke-width="2"/>
<line x1="2507.7" x2="2507.7" y1="1405.2" y2="1677" stroke="rgba(255,255,255,0.17)" stroke-width="2"/>
<line x1="2654.4" x2="2654.4" y1="1405.2" y2="1677" stroke="rgba(255,255,255,0.17)" stroke-width="2"/>
<line x1="2801.2" x2="2801.2" y1="1405.2" y2="1677" stroke="rgba(255,255,255,0.17)" stroke-width="2"/>
<line x1="2947.9" x2="2947.9" y1="1405.2" y2="1677" stroke="rgba(255,255,255,0.17)" stroke-width="2"/>
<line x1="3094.6" x2="3094.6" y1="1405.2" y2="1677" stroke="rgba(255,255,255,0.17)" stroke-width="2"/>
<text x="2244.3" y="1412.7" text-anchor="end" font-size="23.5" fill="#d5d9e0" stroke="#d5d9e0" stroke-width="0.5">1.0</text>
<text x="2244.3" y="1480.6" text-anchor="end" font-size="23.5" fill="#d5d9e0" stroke="#d5d9e0" stroke-width="0.5">0.5</text>
<text x="2244.3" y="1548.6" text-anchor="end" font-size="23.5" fill="#d5d9e0" stroke="#d5d9e0" stroke-width="0.5">0</text>
<text x="2244.3" y="1616.5" text-anchor="end" font-size="23.5" fill="#d5d9e0" stroke="#d5d9e0" stroke-width="0.5">-0.5</text>
<text x="2244.3" y="1684.5" text-anchor="end" font-size="23.5" fill="#d5d9e0" stroke="#d5d9e0" stroke-width="0.5">-1.0</text>
<text x="2361" y="1712.3" text-anchor="middle" font-size="23.5" fill="#d5d9e0" stroke="#d5d9e0" stroke-width="0.5">16:05</text>
<text x="2507.7" y="1712.3" text-anchor="middle" font-size="23.5" fill="#d5d9e0" stroke="#d5d9e0" stroke-width="0.5">16:10</text>
<text x="2654.4" y="1712.3" text-anchor="middle" font-size="23.5" fill="#d5d9e0" stroke="#d5d9e0" stroke-width="0.5">16:15</text>
<text x="2801.2" y="1712.3" text-anchor="middle" font-size="23.5" fill="#d5d9e0" stroke="#d5d9e0" stroke-width="0.5">16:20</text>
<text x="2947.9" y="1712.3" text-anchor="middle" font-size="23.5" fill="#d5d9e0" stroke="#d5d9e0" stroke-width="0.5">16:25</text>
<text x="3094.6" y="1712.3" text-anchor="middle" font-size="23.5" fill="#d5d9e0" stroke="#d5d9e0" stroke-width="0.5">16:30</text>
<text x="2685" y="1504" text-anchor="middle" font-size="28" fill="#d2d6dd" stroke="#d2d6dd" stroke-width="0.5">No data</text>
</svg>
</div>
</div>
<div style="position:absolute;left:0;top:104px;width:120px;height:1648px;background:#16171b"></div>
<div style="position:absolute;left:120px;top:104px;width:14px;height:1648px;background:linear-gradient(90deg,rgba(0,0,0,0.55),rgba(0,0,0,0))"></div>
<svg style="position:absolute;left:20px;top:115px" width="80" height="85" viewBox="0 0 80 85"><defs><linearGradient id="glg" gradientUnits="userSpaceOnUse" x1="0" y1="14" x2="0" y2="72"><stop offset="0" stop-color="#df5c39"/><stop offset="0.45" stop-color="#e5843b"/><stop offset="1" stop-color="#f2c541"/></linearGradient></defs>
<path fill="url(#glg)" stroke="url(#glg)" stroke-width="2.5" stroke-linejoin="round" d="M38.5 12 L44 18.5 L56 19 L57.5 25 Q63 31 64 40 L60.5 49 L62.8 56 L53 65.5 L48 71.5 L41.8 67.5 L23 69.3 L21.8 60.3 L9 49 L16.5 39.5 L14.5 23 L27 21.8 Z"/>
<circle cx="42.3" cy="43.3" r="18.2" fill="#16171b"/>
<path d="M46.96 25.91 L47.72 26.00 L48.49 26.11 L49.25 26.26 L50.02 26.45 L50.77 26.67 L51.53 26.92 L52.28 27.21 L53.02 27.53 L53.75 27.89 L54.47 28.28 L55.17 28.70 L55.87 29.15 L56.54 29.64 L57.20 30.16 L57.84 30.71 L58.46 31.30 L59.06 31.91 L59.64 32.55 L60.19 33.22 L60.71 33.92 L61.21 34.64 L61.68 35.39 L62.12 36.16 L62.53 36.96 L62.91 37.78 L63.25 38.62 L63.56 39.47 L63.83 40.35 L64.07 41.24 L64.27 42.15 L66.87 42.01 L66.66 41.00 L66.41 40.00 L66.12 39.01 L65.79 38.05 L65.42 37.11 L65.01 36.18 L64.57 35.28 L64.09 34.41 L63.58 33.56 L63.03 32.74 L62.45 31.94 L61.85 31.18 L61.21 30.45 L60.55 29.75 L59.86 29.08 L59.15 28.44 L58.42 27.84 L57.67 27.28 L56.89 26.75 L56.10 26.25 L55.30 25.80 L54.48 25.38 L53.65 25.00 L52.81 24.66 L51.95 24.35 L51.10 24.08 L50.23 23.86 L49.37 23.67 L48.50 23.52 L47.63 23.40 Z" fill="#16171b"/>
<path d="M43.70 53.60 L43.12 53.59 L42.53 53.55 L41.95 53.47 L41.38 53.36 L40.80 53.21 L40.24 53.03 L39.68 52.81 L39.14 52.56 L38.61 52.27 L38.09 51.94 L37.60 51.58 L37.12 51.19 L36.67 50.76 L36.24 50.30 L35.84 49.81 L35.47 49.28 L35.14 48.73 L34.83 48.16 L34.57 47.56 L34.34 46.94 L34.15 46.29 L34.00 45.63 L33.90 44.96 L33.84 44.27 L33.83 43.57 L33.87 42.87 L33.95 42.16 L34.08 41.45 L34.27 40.75 L34.50 40.05 L34.78 39.36 L35.12 38.68 L35.50 38.03 L35.93 37.39 L36.41 36.77 L36.93 36.19 L37.50 35.63 L38.12 35.11 L38.78 34.63 L39.47 34.19 L40.21 33.79 L40.97 33.44 L41.77 33.14 L42.60 32.89 L43.45 32.70 L44.33 32.57 L45.22 32.49 L46.13 32.48 L47.04 32.53 L47.96 32.65 L48.88 32.83 L49.80 33.08 L50.70 33.39 L51.60 33.77 L52.47 34.22 L53.33 34.73 L54.15 35.31 L54.94 35.95 L55.69 36.65 L56.40 37.41 L57.07 38.23 L57.68 39.11 L58.24 40.03 L58.73 41.00 L59.16 42.02 L59.53 43.07 L59.82 44.16 L60.04 45.29 L60.18 46.43 L60.25 47.60 L60.23 48.78 L60.12 49.97 L59.94 51.17 L59.66 52.36 L59.30 53.54 L58.85 54.71 L58.32 55.85 L57.70 56.97 L57.00 58.05 L56.21 59.10 L49.32 51.44 L49.74 51.04 L50.13 50.61 L50.49 50.15 L50.82 49.66 L51.11 49.16 L51.36 48.64 L51.58 48.10 L51.77 47.54 L51.91 46.98 L52.01 46.41 L52.08 45.83 L52.10 45.24 L52.08 44.66 L52.03 44.08 L51.93 43.51 L51.79 42.94 L51.61 42.39 L51.40 41.84 L51.15 41.32 L50.86 40.81 L50.54 40.33 L50.19 39.86 L49.80 39.43 L49.39 39.02 L48.94 38.64 L48.48 38.29 L47.99 37.98 L47.47 37.70 L46.94 37.45 L46.40 37.25 L45.84 37.08 L45.27 36.95 L44.70 36.86 L44.12 36.81 L43.54 36.80 L42.95 36.83 L42.38 36.91 L41.80 37.02 L41.24 37.17 L40.69 37.36 L40.15 37.59 L39.63 37.85 L39.13 38.15 L38.66 38.48 L38.20 38.85 L37.78 39.24 L37.38 39.67 L37.01 40.12 L36.67 40.60 L36.37 41.10 L36.10 41.61 L35.87 42.15 L35.68 42.70 L35.53 43.26 L35.41 43.83 L35.34 44.41 L35.30 44.99 L35.31 45.57 L35.35 46.15 L35.44 46.73 L35.57 47.30 L35.73 47.86 L35.94 48.40 L36.18 48.93 L36.45 49.45 L36.76 49.94 L37.11 50.41 L37.49 50.85 L37.89 51.27 L38.33 51.66 L38.79 52.02 L39.27 52.34 L39.78 52.63 L40.30 52.88 L40.84 53.10 L41.40 53.28 L41.96 53.42 L42.54 53.52 L43.12 53.58 L43.70 53.60 Z" fill="url(#glg)"/></svg>
<svg style="position:absolute;left:30px;top:306px" width="60" height="60"><circle cx="30" cy="30" r="16" stroke="#a2a7b0" stroke-width="4" fill="none" stroke-linecap="round" stroke-linejoin="round"/><path d="M42 42 L49.5 49.5" stroke="#a2a7b0" stroke-width="4" fill="none" stroke-linecap="round" stroke-linejoin="round"/></svg>
<svg style="position:absolute;left:32px;top:396px" width="60" height="60"><path d="M30 16 V44 M16 30 H44" stroke="#a2a7b0" stroke-width="4" fill="none" stroke-linecap="round" stroke-linejoin="round"/></svg>
<svg style="position:absolute;left:32px;top:484px" width="60" height="60"><rect x="12" y="12" width="14" height="14" rx="1.5" stroke="#a2a7b0" stroke-width="4" fill="none" stroke-linecap="round" stroke-linejoin="round"/><rect x="34" y="12" width="14" height="14" rx="1.5" stroke="#a2a7b0" stroke-width="4" fill="none" stroke-linecap="round" stroke-linejoin="round"/><rect x="12" y="34" width="14" height="14" rx="1.5" stroke="#a2a7b0" stroke-width="4" fill="none" stroke-linecap="round" stroke-linejoin="round"/><rect x="34" y="34" width="14" height="14" rx="1.5" stroke="#a2a7b0" stroke-width="4" fill="none" stroke-linecap="round" stroke-linejoin="round"/></svg>
<svg style="position:absolute;left:32px;top:572px" width="60" height="60"><circle cx="30" cy="30" r="18" stroke="#a2a7b0" stroke-width="4" fill="none" stroke-linecap="round" stroke-linejoin="round"/><path d="M30 12 V16 M30 44 V48 M12 30 H16 M44 30 H48" stroke="#a2a7b0" stroke-width="4" fill="none" stroke-linecap="round" stroke-linejoin="round"/><path d="M38.5 21.5 L33.5 33.5 L21.5 38.5 L26.5 26.5 Z" fill="#a2a7b0" stroke="#a2a7b0" stroke-width="3" stroke-linejoin="round"/><circle cx="30" cy="30" r="2.3" fill="#141619"/></svg>
<svg style="position:absolute;left:36px;top:664px" width="52" height="52"><path d="M26 6 V10.5 M16 30 V22 A10 10 0 0 1 36 22 V30" stroke="#a2a7b0" stroke-width="4" fill="none" stroke-linecap="round" stroke-linejoin="round"/><rect x="12" y="30.6" width="28" height="7.3" rx="3" stroke="#a2a7b0" stroke-width="4" fill="none" stroke-linecap="round" stroke-linejoin="round"/><path d="M20.3 38.5 A5.7 5.7 0 0 0 31.7 38.5" stroke="#a2a7b0" stroke-width="4" fill="none" stroke-linecap="round" stroke-linejoin="round"/></svg>
<svg style="position:absolute;left:32px;top:748px" width="60" height="60" viewBox="0 0 60 60"><path d="M25.13 16.24 L26.57 12.33 L33.43 12.33 L34.87 16.24 L36.29 16.82 L40.07 15.08 L44.92 19.93 L43.18 23.71 L43.76 25.13 L47.67 26.57 L47.67 33.43 L43.76 34.87 L43.18 36.29 L44.92 40.07 L40.07 44.92 L36.29 43.18 L34.87 43.76 L33.43 47.67 L26.57 47.67 L25.13 43.76 L23.71 43.18 L19.93 44.92 L15.08 40.07 L16.82 36.29 L16.24 34.87 L12.33 33.43 L12.33 26.57 L16.24 25.13 L16.82 23.71 L15.08 19.93 L19.93 15.08 L23.71 16.82 Z" stroke="#a2a7b0" stroke-width="4.2" fill="none" stroke-linejoin="round"/><circle cx="30" cy="30" r="5.9" stroke="#a2a7b0" stroke-width="4.2" fill="none"/></svg>
<svg style="position:absolute;left:32px;top:1558px" width="60" height="60"><path d="M44.5 20.5 A17.5 17.5 0 1 0 44.5 39.5" stroke="#a2a7b0" stroke-width="4" fill="none" stroke-linecap="round" stroke-linejoin="round"/><path d="M32 22.5 L24.5 30 L32 37.5 M24.5 30 H49.5" stroke="#a2a7b0" stroke-width="4" fill="none" stroke-linecap="round" stroke-linejoin="round"/></svg>
<svg style="position:absolute;left:32px;top:1646px" width="60" height="60"><circle cx="30" cy="30" r="18" stroke="#a2a7b0" stroke-width="4" fill="none" stroke-linecap="round" stroke-linejoin="round"/><path d="M25.5 26 A4.8 4.8 0 1 1 31 30.5 Q30 31.2 30 33.5" stroke="#a2a7b0" stroke-width="4" fill="none" stroke-linecap="round" stroke-linejoin="round"/><circle cx="30" cy="39.5" r="2.4" fill="#a2a7b0"/></svg>
<svg style="position:absolute;left:150px;top:140px" width="40" height="40"><rect x="6.5" y="6.5" width="11" height="11" rx="1" stroke="#c7cbd3" stroke-width="3.5" fill="none"/><rect x="22.5" y="6.5" width="11" height="11" rx="1" stroke="#c7cbd3" stroke-width="3.5" fill="none"/><rect x="6.5" y="22.5" width="11" height="11" rx="1" stroke="#c7cbd3" stroke-width="3.5" fill="none"/><rect x="22.5" y="22.5" width="11" height="11" rx="1" stroke="#c7cbd3" stroke-width="3.5" fill="none"/></svg>
<div style="position:absolute;left:204px;top:137.8px;font-family:'Liberation Sans', sans-serif;font-size:36px;letter-spacing:-0.28px;line-height:44px;color:#d2d6dd;white-space:nowrap">SkyWalking OAP Cluster Monitor Dashboard</div>
<svg style="position:absolute;left:930px;top:130px" width="44" height="44"><circle cx="31" cy="13" r="4.4" stroke="#d2d6dd" stroke-width="3.2" fill="none"/><circle cx="13" cy="22" r="4.4" stroke="#d2d6dd" stroke-width="3.2" fill="none"/><circle cx="31" cy="31" r="4.4" stroke="#d2d6dd" stroke-width="3.2" fill="none"/><path d="M17 20 L27 15 M17 24 L27 29" stroke="#d2d6dd" stroke-width="3"/></svg>
<div style="position:absolute;left:2263px;top:126px;width:84px;height:64px;background:#141619;border:2px solid #2c2f34;border-radius:4px;box-sizing:border-box"></div>
<div style="position:absolute;left:2355px;top:126px;width:72px;height:64px;background:#141619;border:2px solid #2c2f34;border-radius:4px;box-sizing:border-box"></div>
<div style="position:absolute;left:2435px;top:126px;width:72px;height:64px;background:#141619;border:2px solid #2c2f34;border-radius:4px;box-sizing:border-box"></div>
<div style="position:absolute;left:2535px;top:126px;width:72px;height:64px;background:#141619;border:2px solid #2c2f34;border-radius:4px;box-sizing:border-box"></div>
<div style="position:absolute;left:2635px;top:126px;width:329px;height:64px;background:#141619;border:2px solid #2c2f34;border-radius:4px;box-sizing:border-box"></div>
<div style="position:absolute;left:2972px;top:126px;width:72px;height:64px;background:#141619;border:2px solid #2c2f34;border-radius:4px;box-sizing:border-box"></div>
<div style="position:absolute;left:3052px;top:126px;width:134px;height:64px;background:#141619;border:2px solid #2c2f34;border-radius:4px;box-sizing:border-box"></div>
<div style="position:absolute;left:3122px;top:128px;width:2px;height:60px;background:#2c2f34"></div>
<svg style="position:absolute;left:2263px;top:126px" width="84" height="64" viewBox="2263 126 84 64">
<defs><linearGradient id="apg" gradientUnits="userSpaceOnUse" x1="0" y1="149" x2="0" y2="167"><stop offset="0" stop-color="#ee8a3d"/><stop offset="1" stop-color="#f7cf4d"/></linearGradient></defs>
<rect x="2280" y="154" width="7" height="17" rx="1.2" fill="#8e9197"/><rect x="2288.6" y="148.8" width="7" height="22.2" rx="1.2" fill="#8e9197"/><rect x="2297.2" y="158" width="7" height="13" rx="1.2" fill="#8e9197"/><rect x="2305.8" y="145" width="7" height="26" rx="1.2" fill="#8e9197"/>
<path d="M2310.6 158.1 H2328 M2319.3 149.4 V166.8" stroke="#16171b" stroke-width="10"/>
<path d="M2310.6 158.1 H2328 M2319.3 149.4 V166.8" stroke="url(#apg)" stroke-width="6"/>
</svg>
<svg style="position:absolute;left:2371px;top:138px" width="40" height="40"><path d="M7 8 H23.5 L30.8 15.3 V29.8 A2 2 0 0 1 28.8 31.8 H9 A2 2 0 0 1 7 29.8 Z" stroke="#8e9197" stroke-width="3.2" fill="none" stroke-linecap="round" stroke-linejoin="round"/><path d="M13 8 V12.5 H21.5 V8" stroke="#8e9197" stroke-width="3.2" fill="none" stroke-linecap="round" stroke-linejoin="round"/><path d="M12.2 31.8 V24.5 A2 2 0 0 1 14.2 22.5 H23.6 A2 2 0 0 1 25.6 24.5 V31.8" stroke="#8e9197" stroke-width="3.2" fill="none" stroke-linecap="round" stroke-linejoin="round"/></svg>
<svg style="position:absolute;left:2451px;top:138px" width="40" height="40" viewBox="0 0 40 40"><path d="M16.36 9.73 L17.44 6.85 L22.56 6.85 L23.64 9.73 L24.69 10.16 L27.49 8.89 L31.11 12.51 L29.84 15.31 L30.27 16.36 L33.15 17.44 L33.15 22.56 L30.27 23.64 L29.84 24.69 L31.11 27.49 L27.49 31.11 L24.69 29.84 L23.64 30.27 L22.56 33.15 L17.44 33.15 L16.36 30.27 L15.31 29.84 L12.51 31.11 L8.89 27.49 L10.16 24.69 L9.73 23.64 L6.85 22.56 L6.85 17.44 L9.73 16.36 L10.16 15.31 L8.89 12.51 L12.51 8.89 L15.31 10.16 Z" stroke="#8e9197" stroke-width="3.2" fill="none" stroke-linejoin="round"/><circle cx="20" cy="20" r="4.4" stroke="#8e9197" stroke-width="3.2" fill="none"/></svg>
<svg style="position:absolute;left:2551px;top:138px" width="40" height="40"><rect x="5.9" y="6.6" width="26.3" height="20.5" rx="3" stroke="#8e9197" stroke-width="3.2" fill="none" stroke-linecap="round" stroke-linejoin="round"/><path d="M5.9 22.2 H32.2" stroke="#8e9197" stroke-width="3.2" fill="none" stroke-linecap="round" stroke-linejoin="round"/><path d="M15.2 27.5 L13.2 32.8 H24.8 L22.8 27.5" stroke="#8e9197" stroke-width="3.2" fill="none" stroke-linecap="round" stroke-linejoin="round"/></svg>
<svg style="position:absolute;left:2650px;top:138px" width="40" height="40"><circle cx="20" cy="20" r="14" stroke="#8e9197" stroke-width="3.2" fill="none" stroke-linecap="round" stroke-linejoin="round"/><path d="M20 12 V21 H14" stroke="#8e9197" stroke-width="3.2" fill="none" stroke-linecap="round" stroke-linejoin="round"/></svg>
<div style="position:absolute;left:2697px;top:141px;font-family:'Liberation Sans', sans-serif;font-size:26.5px;font-weight:bold;line-height:32px;color:#8e9197;white-space:nowrap">Last 30 minutes</div>
<svg style="position:absolute;left:2920px;top:142px" width="32" height="32"><path d="M9 13 L16 20 L23 13" stroke="#8e9197" stroke-width="3.2" fill="none" stroke-linecap="round" stroke-linejoin="round"/></svg>
<svg style="position:absolute;left:3138px;top:142px" width="32" height="32"><path d="M9 14 L16 21 L23 14" stroke="#8e9197" stroke-width="3.2" fill="none" stroke-linecap="round" stroke-linejoin="round"/></svg>
<svg style="position:absolute;left:2988px;top:138px" width="40" height="40"><circle cx="18" cy="18" r="12.5" stroke="#8e9197" stroke-width="3.2" fill="none" stroke-linecap="round" stroke-linejoin="round"/><path d="M12.5 18 H23.5 M27 27 L33 33" stroke="#8e9197" stroke-width="3.2" fill="none" stroke-linecap="round" stroke-linejoin="round"/></svg>
<svg style="position:absolute;left:3068px;top:138px" width="40" height="40"><path d="M31.5 15 A12.5 12.5 0 0 0 9 12" stroke="#8e9197" stroke-width="3.2" fill="none" stroke-linecap="round" stroke-linejoin="round"/><path d="M8.5 25 A12.5 12.5 0 0 0 31 28" stroke="#8e9197" stroke-width="3.2" fill="none" stroke-linecap="round" stroke-linejoin="round"/><path d="M9 5 V12 H16" stroke="#8e9197" stroke-width="3.2" fill="none" stroke-linecap="round" stroke-linejoin="round"/><path d="M31 35 V28 H24" stroke="#8e9197" stroke-width="3.2" fill="none" stroke-linecap="round" stroke-linejoin="round"/></svg>
<div style="position:absolute;left:0;top:0;width:3218px;height:104px;background:#000;border-top-left-radius:20px;border-top-right-radius:20px;box-shadow:inset 0 2px 0 #9b9b9b"></div>
<div style="position:absolute;left:40px;top:40px;width:24px;height:24px;border-radius:50%;background:#ff5f57"></div>
<div style="position:absolute;left:80px;top:40px;width:24px;height:24px;border-radius:50%;background:#febc2e"></div>
<div style="position:absolute;left:120px;top:40px;width:24px;height:24px;border-radius:50%;background:#28c840"></div>
<div style="position:absolute;left:808px;top:24px;width:296px;height:56px;border-radius:12px;background:#262626"></div>
<svg style="position:absolute;left:824px;top:34px" width="36" height="36" viewBox="0 0 36 36">
<rect x="0" y="0" width="36" height="36" rx="8" fill="#fff"/>
<path d="M23.5 4.5 Q32 5.5 32.4 12.5 Q32.6 17 30.8 21.5 Q30.5 12 23.5 4.5 Z" fill="#b5b5b5"/>
<path d="M14 7 Q12 5 8.5 5.2 Q4.6 5.8 4.6 10.5 Q4.8 14.5 9 18.8 Q13 23 12.6 28.2 Q12 32.6 7.5 32.4 Q5 32.3 3.6 30.8" stroke="#3d8ef0" stroke-width="3.3" fill="none"/>
<path d="M15.3 13.6 L18.2 32.6 L21.4 17 L24.6 32.6 L27.6 13.6" stroke="#3d8ef0" stroke-width="2.5" fill="none" stroke-linejoin="round"/>
</svg>
<div style="position:absolute;left:869px;top:37.7px;font-family:'Liberation Sans', sans-serif;font-size:24px;letter-spacing:0.25px;line-height:30px;color:#e6e6e6;white-space:nowrap">Apache SkyWalki...</div>
<div style="position:absolute;left:1128px;top:24px;width:960px;height:56px;border-radius:12px;background:#3a3a3a"></div>
<div style="position:absolute;left:1146px;top:40px;width:24px;height:24px;border-radius:5px;background:#e3e3e3"></div>
<svg style="position:absolute;left:1146px;top:40px" width="24" height="24"><path d="M7.5 7.5 L16.5 16.5 M16.5 7.5 L7.5 16.5" stroke="#2a2a2a" stroke-width="2.6" stroke-linecap="round"/></svg>
<div style="position:absolute;left:1187px;top:36.6px;width:830px;overflow:hidden;font-family:'Liberation Sans', sans-serif;font-size:26px;letter-spacing:0.6px;line-height:32px;color:#f0f0f0;white-space:nowrap;-webkit-mask-image:linear-gradient(90deg,rgba(0,0,0,0.25) 0px,rgba(0,0,0,1) 90px)">e0881eed4-22961232.ap-east-1.elb.amazonaws.com — Not Secure</div>
<div style="position:absolute;left:2035.7px;top:35.3px;width:30.8px;height:30.8px;border-radius:50%;background:#e0e0e0"></div>
<div style="position:absolute;left:2041.7499999999998px;top:48.4px;width:4.6px;height:4.6px;border-radius:50%;background:#333"></div>
<div style="position:absolute;left:2048.8999999999996px;top:48.4px;width:4.6px;height:4.6px;border-radius:50%;background:#333"></div>
<div style="position:absolute;left:2056.0499999999997px;top:48.4px;width:4.6px;height:4.6px;border-radius:50%;background:#333"></div>
<div style="position:absolute;left:2112px;top:24px;width:295px;height:56px;border-radius:12px;background:#262626"></div>
<svg style="position:absolute;left:2128px;top:34px" width="36" height="36" viewBox="0 0 36 36">
<defs><radialGradient id="lg" cx="55%" cy="30%" r="75%"><stop offset="0" stop-color="#e8ffe0"/><stop offset="0.35" stop-color="#8fd87a"/><stop offset="0.8" stop-color="#3f9a3a"/><stop offset="1" stop-color="#5cc0c8"/></radialGradient></defs>
<circle cx="17.8" cy="17.8" r="15.7" fill="url(#lg)"/>
<path d="M9 13 L26 28" stroke="#0a140a" stroke-width="3.2" stroke-linecap="round"/>
<circle cx="12.2" cy="15.8" r="2.6" fill="#0a140a"/>
<path d="M13 19 L9 27 M15 14 L13 7" stroke="#0a140a" stroke-width="1" fill="none"/>
</svg>
<div style="position:absolute;left:2172px;top:37.6px;font-family:'Liberation Sans', sans-serif;font-size:24px;letter-spacing:0.7px;line-height:30px;color:#e6e6e6;white-space:nowrap">Locust for tasks.py</div>
<svg style="position:absolute;left:3140px;top:30px" width="44" height="42" viewBox="0 0 44 42">
<rect x="5" y="4" width="26" height="26" rx="5" fill="none" stroke="#8e8e8e" stroke-width="2.8"/>
<rect x="12" y="11" width="26" height="26" rx="5" fill="#000" stroke="#8e8e8e" stroke-width="2.8"/>
</svg>
<div style="position:absolute;left:3198px;top:1438px;width:18px;height:312px;box-sizing:border-box;border:2px solid #2a2c30;border-radius:9px;background:#0b0c0e"></div>
</body></html>
